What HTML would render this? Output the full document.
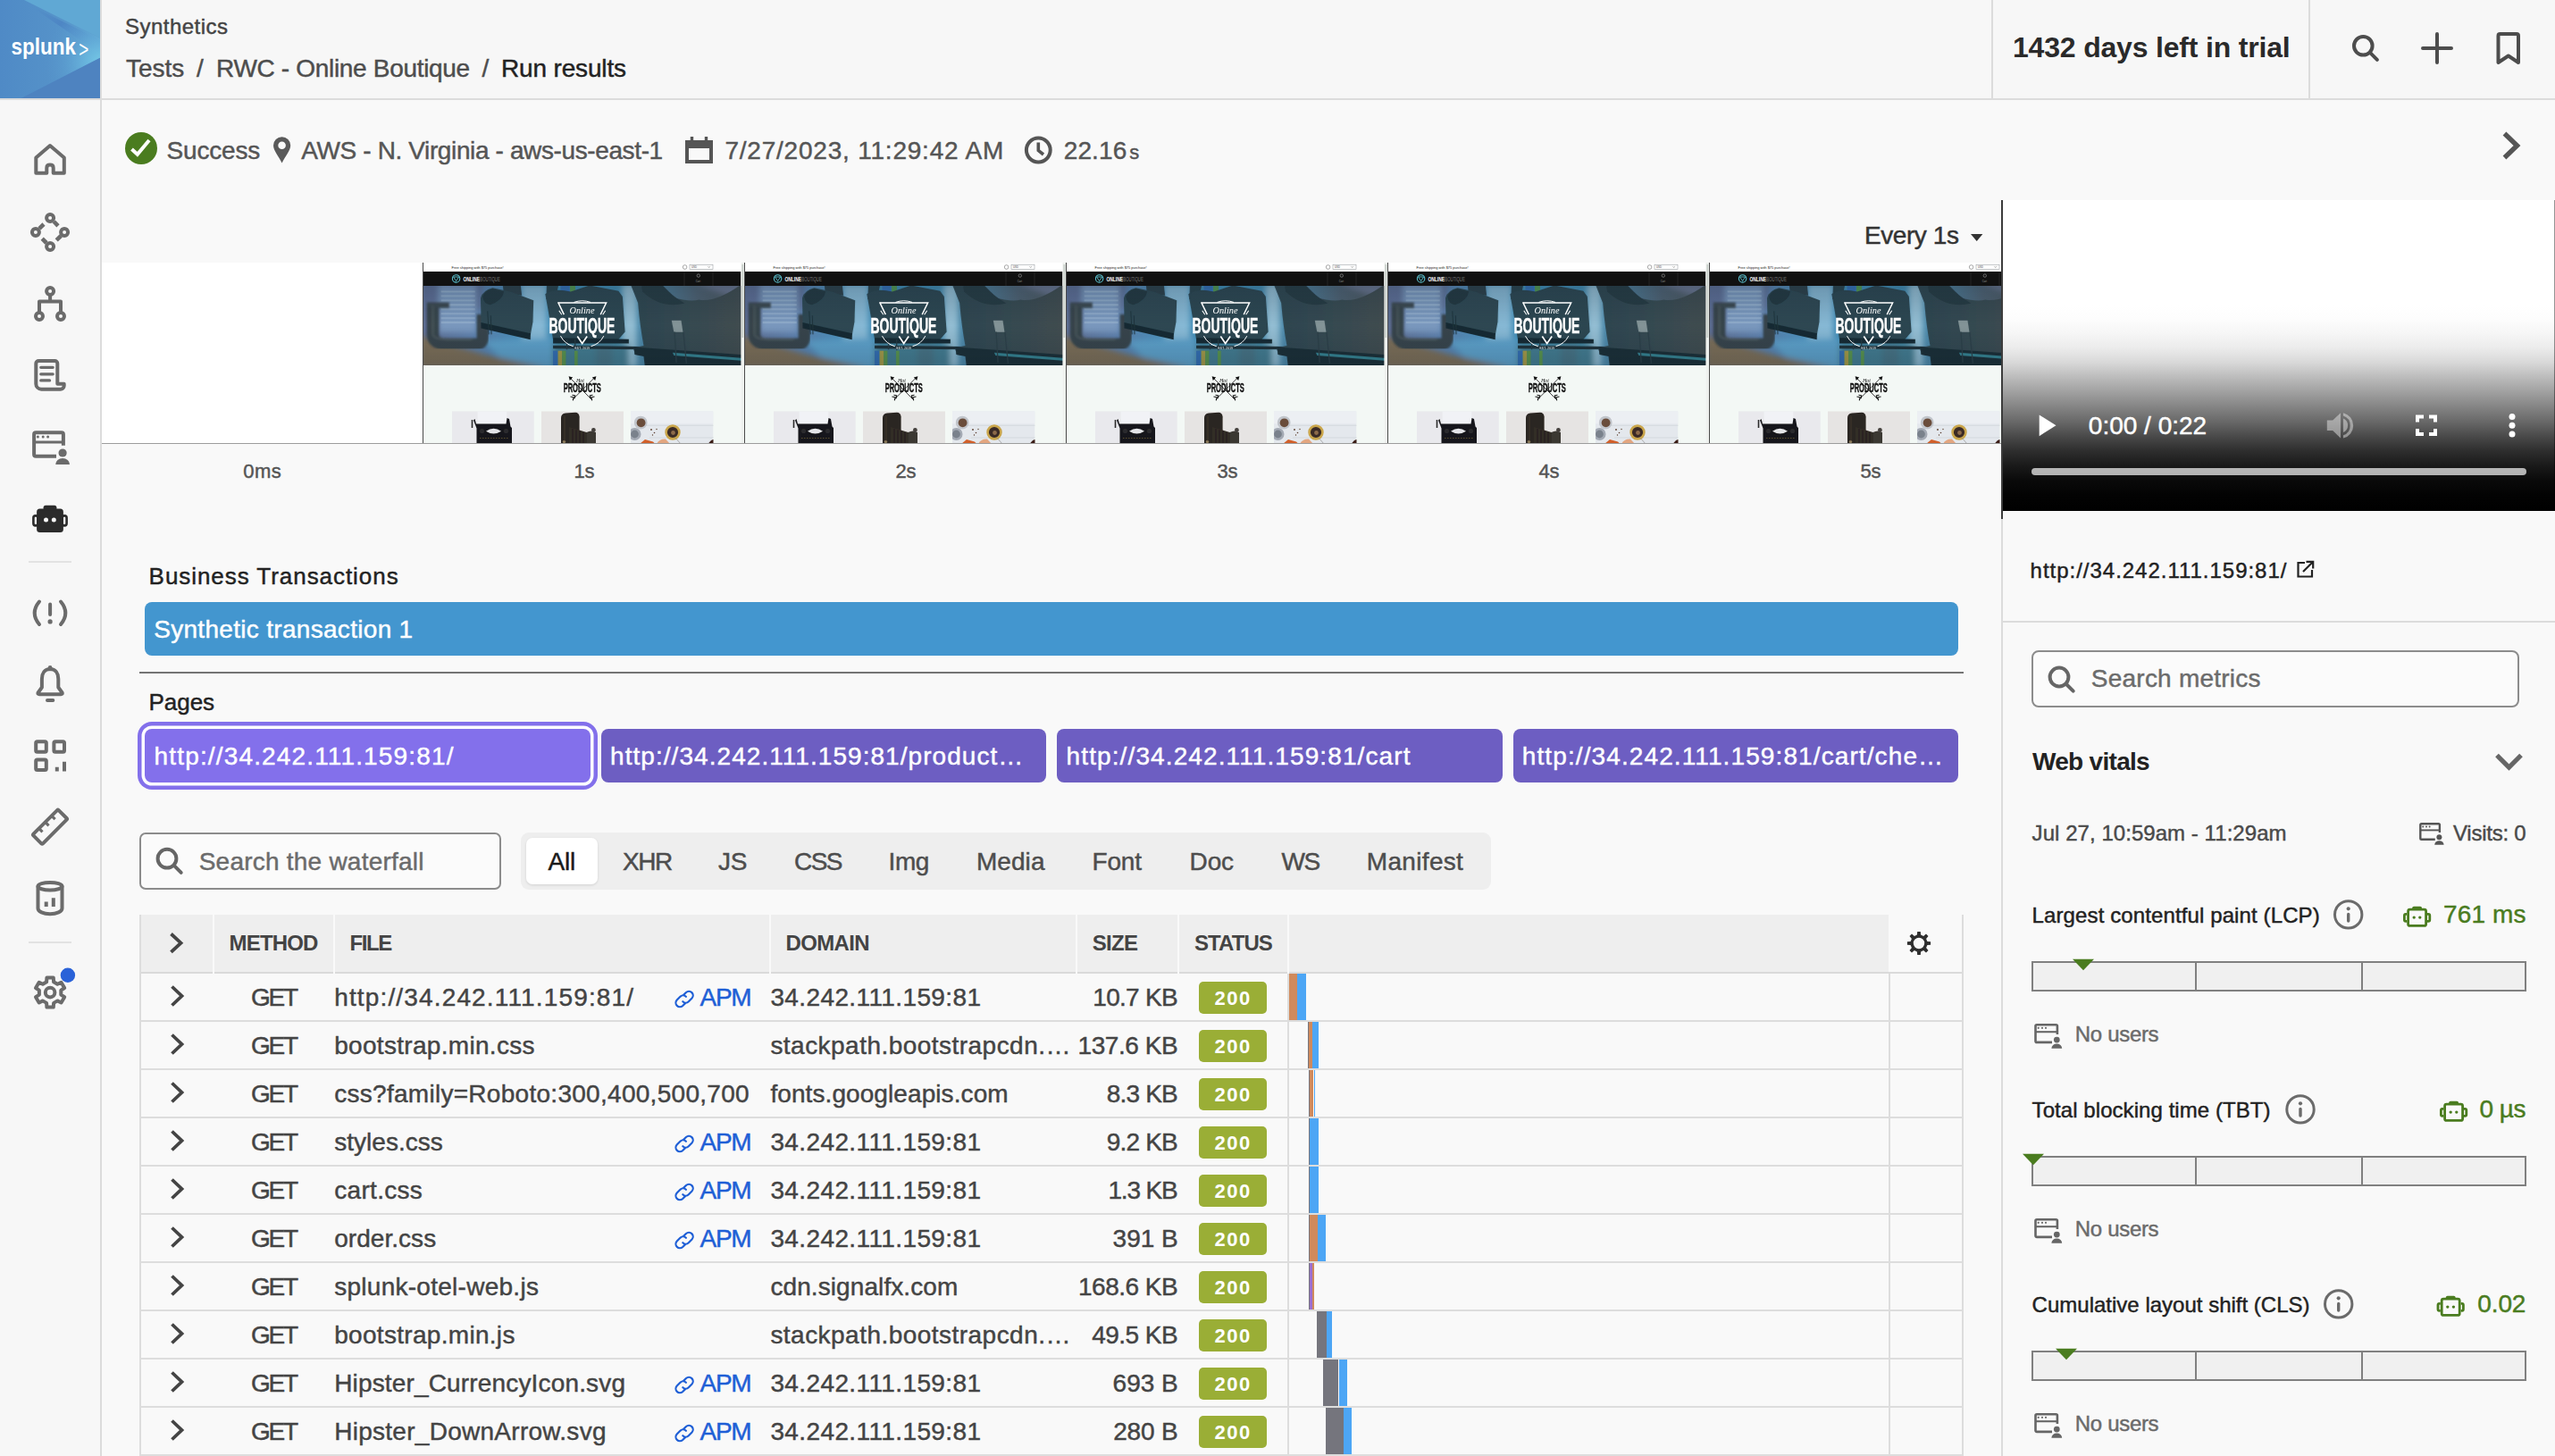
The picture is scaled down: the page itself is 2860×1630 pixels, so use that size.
<!DOCTYPE html>
<html lang="en"><head><meta charset="utf-8"><title>Run results - Synthetics</title>
<style>
*{box-sizing:border-box;margin:0;padding:0}
html,body{width:2860px;height:1630px;overflow:hidden;background:#f9f9f9}
body{position:relative;font-family:"Liberation Sans",sans-serif;}
.t{position:absolute;white-space:nowrap;line-height:1;-webkit-text-stroke:.45px}
.t.bd{-webkit-text-stroke:0}
.b{position:absolute;display:block}
svg.ov{position:absolute;left:0;top:0;pointer-events:none}
@media (max-width:2000px){body{zoom:.5}}
</style></head>
<body>
<svg width="0" height="0" style="position:absolute"><defs>
<linearGradient id="hg" x1="0" x2="1" y1="0" y2="0">
<stop offset="0" stop-color="#6f7096"/><stop offset=".15" stop-color="#6f86b8"/><stop offset=".3" stop-color="#5a9dcd"/>
<stop offset=".45" stop-color="#4a9ac6"/><stop offset=".6" stop-color="#4c96bf"/><stop offset=".7" stop-color="#5b8fb0"/>
<stop offset=".85" stop-color="#5d6270"/><stop offset="1" stop-color="#56504e"/>
</linearGradient>
<linearGradient id="hv" x1="0" x2="0" y1="0" y2="1">
<stop offset="0" stop-color="#1a2a3a" stop-opacity=".25"/><stop offset=".5" stop-color="#1a2a3a" stop-opacity="0"/><stop offset="1" stop-color="#10202c" stop-opacity=".2"/>
</linearGradient>
<linearGradient id="rs" x1="0" x2="1" y1="0" y2="0">
<stop offset="0" stop-color="#343f45"/><stop offset=".45" stop-color="#3d4447"/><stop offset="1" stop-color="#4e4745"/>
</linearGradient>
<filter id="b1" x="-10%" y="-10%" width="120%" height="120%"><feGaussianBlur stdDeviation="1.1"/></filter>
<filter id="b2" x="-10%" y="-10%" width="120%" height="120%"><feGaussianBlur stdDeviation="2.4"/></filter>
<filter id="b0" x="-10%" y="-10%" width="120%" height="120%"><feGaussianBlur stdDeviation=".5"/></filter>
<filter id="z1" x="-5%" y="-5%" width="110%" height="110%"><feGaussianBlur stdDeviation="5"/></filter>
<filter id="z15" x="-10%" y="-10%" width="120%" height="120%"><feGaussianBlur stdDeviation="9"/></filter>
<filter id="z2" x="-20%" y="-20%" width="140%" height="140%"><feGaussianBlur stdDeviation="22"/></filter>
<clipPath id="hc"><rect x="1" y="26" width="355.4" height="89"/></clipPath>
<clipPath id="p1"><rect x="33" y="166.300" width="91.700" height="36.700"/></clipPath>
<clipPath id="p2"><rect x="132.900" y="166.300" width="92.100" height="36.700"/></clipPath>
<clipPath id="p3"><rect x="233" y="166.3" width="92.5" height="36.7"/></clipPath>
</defs></svg>
<div class="b" style="left:0px;top:0px;width:2860px;height:110px;background:#f7f7f7;"></div><div class="b" style="left:0px;top:112px;width:112px;height:1518px;background:#f7f7f7;"></div><div class="b" style="left:0px;top:110px;width:2860px;height:2px;background:#dcdcdc;"></div><div class="b" style="left:112px;top:0px;width:2px;height:1630px;background:#dcdcdc;"></div><div class="b" style="left:32px;top:628px;width:48px;height:2px;background:#e2e2e2;"></div><div class="b" style="left:32px;top:1054px;width:48px;height:2px;background:#e2e2e2;"></div><svg class="b" style="left:0;top:0" width="112" height="110" viewBox="0 0 112 110"><defs><linearGradient id="lg1" x1="0" y1="0" x2="1" y2="0"><stop offset="0" stop-color="#4f8ac6"/><stop offset=".55" stop-color="#5592c9"/><stop offset="1" stop-color="#5c9fd0"/></linearGradient><radialGradient id="lg2" gradientUnits="userSpaceOnUse" cx="114" cy="70" r="64"><stop offset="0" stop-color="#76cae7"/><stop offset=".3" stop-color="#6cbbe0" stop-opacity=".75"/><stop offset=".65" stop-color="#62a9d6" stop-opacity=".3"/><stop offset="1" stop-color="#5a9acc" stop-opacity="0"/></radialGradient><linearGradient id="lg3" x1="0.2" y1="0" x2="0.9" y2="0.6"><stop offset="0" stop-color="#4a80c2" stop-opacity="0"/><stop offset=".5" stop-color="#4a80c2" stop-opacity=".7"/><stop offset="1" stop-color="#4f8ccb" stop-opacity=".2"/></linearGradient></defs><rect width="112" height="110" fill="url(#lg1)"/><path d="M30 4L112 45V60Z" fill="url(#lg3)"/><path d="M0 110H23.700L112 64.800V42.600L27 0H0Z" fill="url(#lg2)"/><path d="M27 0H112V42.600Z" fill="#60a8d4"/><path d="M23.700 110L112 64.800V110Z" fill="#4e83c0"/><text x="12.600" y="60.800" font-family='"Liberation Sans",sans-serif' font-weight="700" font-size="26.500" fill="#fff" textLength="72.400" lengthAdjust="spacingAndGlyphs">splunk</text><text x="88.300" y="63.600" font-family='"Liberation Sans",sans-serif' font-size="25" fill="#fff" textLength="11" lengthAdjust="spacingAndGlyphs">&gt;</text></svg><div class="t" style="left:140.0px;top:18.0px;font-size:24px;color:#444;letter-spacing:0.478px;">Synthetics</div><div class="t" style="left:141.0px;top:63.0px;font-size:28px;color:#4d4d4d;letter-spacing:-0.010px;">Tests</div><div class="t" style="left:220.0px;top:63.0px;font-size:28px;color:#4d4d4d;">/</div><div class="t" style="left:242.0px;top:63.0px;font-size:28px;color:#4d4d4d;letter-spacing:-0.319px;">RWC - Online Boutique</div><div class="t" style="left:539.5px;top:63.0px;font-size:28px;color:#4d4d4d;">/</div><div class="t" style="left:561.0px;top:63.0px;font-size:28px;color:#222;letter-spacing:-0.156px;">Run results</div><div class="b" style="left:2229px;top:0px;width:2px;height:110px;background:#dcdcdc;"></div><div class="b" style="left:2584px;top:0px;width:2px;height:110px;background:#dcdcdc;"></div><div class="t bd" style="left:2253.0px;top:37.0px;font-size:32px;color:#2a2a2a;font-weight:700;letter-spacing:-0.188px;">1432 days left in trial</div>
<div class="t" style="left:186.6px;top:155.0px;font-size:28px;color:#555;letter-spacing:-0.203px;">Success</div><div class="t" style="left:337.3px;top:155.0px;font-size:28px;color:#555;letter-spacing:-0.379px;">AWS - N. Virginia - aws-us-east-1</div><div class="t" style="left:811.4px;top:155.0px;font-size:28px;color:#555;letter-spacing:0.788px;">7/27/2023, 11:29:42 AM</div><div class="t" style="left:1190.7px;top:155.0px;font-size:28px;color:#555;letter-spacing:0.146px;">22.16</div><div class="t" style="left:1264.3px;top:160.0px;font-size:22px;color:#555;">s</div><div class="t" style="left:2086.9px;top:250.0px;font-size:28px;color:#333;letter-spacing:-0.403px;">Every 1s</div>
<div class="b" style="left:114px;top:294px;width:2126px;height:202px;background:#fff;"></div><svg class="b" style="left:473px;top:294px" width="360" height="203" viewBox="0 0 360 203"><rect x="0" y="0" width="360" height="203" fill="#fff"/><rect x="1" y="115" width="355.4" height="88" fill="#f3f8f5"/><text x="32.6" y="6.6" font-family='"Liberation Sans",sans-serif' font-size="3.9" fill="#222" textLength="58" lengthAdjust="spacingAndGlyphs">Free shipping with $75 purchase!</text><circle cx="293.6" cy="5" r="2.3" fill="none" stroke="#555" stroke-width=".5"/><rect x="299" y="2.3" width="26" height="5" fill="#fff" stroke="#8a8f94" stroke-width=".5"/><text x="301" y="6" font-family='"Liberation Sans",sans-serif' font-size="2.8" fill="#333">USD</text><path d="M319.5 4.2l1.2 1.3 1.2-1.3" fill="none" stroke="#444" stroke-width=".45"/><rect x="1" y="10" width="355.4" height="16" fill="#111"/><circle cx="37.6" cy="17.9" r="4.2" fill="none" stroke="#5cc2cf" stroke-width="1.1"/><path d="M34.6 16l6 0-3 4.6z" fill="none" stroke="#5cc2cf" stroke-width=".9"/><text x="45.4" y="21" font-family='"Liberation Sans",sans-serif' font-weight="700" font-size="6.6" fill="#fff" textLength="18.6" lengthAdjust="spacingAndGlyphs">ONLINE</text><text x="64.3" y="21" font-family='"Liberation Sans",sans-serif' font-size="6.6" fill="#777" textLength="22.5" lengthAdjust="spacingAndGlyphs">BOUTIQUE</text><path d="M293 10v16M325 10v16" stroke="#3a3a3a" stroke-width=".5"/><circle cx="308.8" cy="14.6" r="1.7" fill="none" stroke="#bbb" stroke-width=".5"/><text x="305.8" y="21.5" font-family='"Liberation Sans",sans-serif' font-size="2.8" fill="#999">Cart</text><g clip-path="url(#hc)"><g transform="translate(-.5 24) scale(.14091)"><rect x="0" y="0" width="2570" height="660" fill="url(#hg)"/><g filter="url(#z2)"><rect x="-20" y="-20" width="500" height="230" fill="#70729d"/><rect x="130" y="0" width="300" height="385" fill="#93a6cf"/><rect x="790" y="0" width="200" height="540" fill="#a3cfec"/><rect x="1590" y="0" width="115" height="660" fill="#b3d6ea"/><path d="M480 450L1040 430V660H700Z" fill="#6fb2e0"/><path d="M-20 410L500 560 1010 670H-20Z" fill="#97724f"/><path d="M2150 -10H2580V150Z" fill="#7f7a95"/><rect x="1040" y="470" width="600" height="200" fill="#4f8498"/><rect x="1380" y="470" width="130" height="200" fill="#527888"/></g><g filter="url(#z1)"><path d="M1040 530h36v130h-36z" fill="#3b72c2"/><path d="M1080 530h32v130h-32z" fill="#c9a93a"/><path d="M1112 530h30v130h-30z" fill="#6ba242"/><path d="M1210 530h26v130h-26z" fill="#6ba242"/><path d="M1100 0h72v90h-72z" fill="#3d74c6"/><path d="M1175 0h42v80h-42z" fill="#62a546"/><path d="M150 60H420M150 95H420M150 130H420M150 165H420M150 200H420M150 235H420M150 270H420M150 305H420" stroke="#cfdbf0" stroke-width="11" opacity=".6"/><g filter="url(#z15)"><path d="M85 150V400Q85 478 200 478H420Q482 478 482 420V240" fill="none" stroke="#403d3f" stroke-width="96"/><path d="M40 168H215" stroke="#454244" stroke-width="44"/><path d="M85 170V395Q85 440 200 440H400" fill="none" stroke="#5a5657" stroke-width="14"/></g><path d="M640 0H782L792 90H650Z" fill="#30383d"/><path d="M465 110Q480 50 560 30L700 60 885 130 880 300 862 400 470 330Z" fill="#34434a"/><path d="M480 100Q500 50 560 38L650 60Q640 130 540 165Q490 160 480 100Z" fill="#272d31"/><path d="M468 305L862 392 860 442 468 352Z" fill="#191f23"/><path d="M520 215L530 400M545 250L550 400" stroke="#22282c" stroke-width="7"/><path d="M990 0H1085L1060 120H985Z" fill="#2f3b41"/><path d="M978 80Q1040 30 1180 60L1330 10 1560 55 1592 100 1612 380 1560 440H1040L1000 200Z" fill="#303f46"/><path d="M1040 428L1642 438V472H1040Z" fill="#181e22"/><path d="M1040 488L1905 498V522L1040 512Z" fill="#20272b"/><path d="M1150 440V520M1215 440V525" stroke="#2a3136" stroke-width="9"/><path d="M1655 0L1715 150Q1730 330 1760 490L1680 505 1690 560 2580 650V0H2540Q2330 150 2200 125Q2080 160 1745 20L1740 0Z" fill="url(#rs)"/><path d="M1740 0L1750 60Q1900 200 2085 152Q2010 110 1960 60L1900 0Z" fill="#2b3135"/><path d="M1680 500L2580 565V660H1770L1760 575 1690 560Z" fill="#1e2428"/><path d="M1990 545L2580 590V612L2000 568Z" fill="#3e8c98"/><path d="M1982 290H2058L2072 382H2000Z" fill="#9fa19f"/><path d="M2005 380L2020 625M2075 382L2100 630" stroke="#33383c" stroke-width="9"/></g><rect x="0" y="0" width="2570" height="660" fill="#12607a" opacity=".2"/><rect x="0" y="0" width="2570" height="660" fill="url(#hv)"/></g></g><g fill="none" stroke="#fff" stroke-width="1.5" stroke-linecap="square"><path d="M152 45H205.600L199.500 57.500M152 45L158 57.500"/><path d="M155.500 57.800l-2.400 -3.600M202 57.800l2.400 -3.600" stroke-width="1.100"/><path d="M170 44.200Q178.700 41.200 187.500 44.200" stroke-width="1"/><path d="M154.700 82.600Q159 91 168.300 93.600M202.600 82.600Q198.300 91 189 93.600" stroke-width="1"/><path d="M173.800 83.300L178.700 90.400 183.700 83.300" stroke-width="1.700"/></g><text x="164.500" y="56.600" font-family='"Liberation Serif",serif' font-style="italic" font-size="10" fill="#fff" textLength="28" lengthAdjust="spacingAndGlyphs">Online</text><text x="141.400" y="78.600" font-family='"Liberation Sans",sans-serif' font-weight="700" font-size="24.200" fill="#fff" stroke="#fff" stroke-width=".5" textLength="74" lengthAdjust="spacingAndGlyphs">BOUTIQUE</text><text x="170.500" y="97.300" font-family='"Liberation Sans",sans-serif' font-size="3" fill="#fff" textLength="16.500" lengthAdjust="spacing">EST. 2019</text><path d="M164.500 128.500L189 153M192.800 128.500L168.300 153" stroke="#111" stroke-width=".8"/><path d="M163.600 127.300l4.600 1.200-3.400 3.400zM194.400 127.300l-4.600 1.200 3.400 3.400z" fill="#111"/><path d="M165.500 150l3.600 .8-.8 3.600M192.500 150l-3.600 .8 .8 3.600M167.500 148.300l3.200 .7-.7 3.200M190.500 148.300l-3.200 .7 .7 3.200" fill="none" stroke="#111" stroke-width="1.100"/><text x="172" y="133.600" font-family='"Liberation Serif",serif' font-style="italic" font-size="6" fill="#222" textLength="9" lengthAdjust="spacingAndGlyphs">Hot</text><text x="157.700" y="145.200" font-family='"Liberation Sans",sans-serif' font-weight="700" font-size="14.300" fill="#111" stroke="#111" stroke-width=".45" textLength="42" lengthAdjust="spacingAndGlyphs">PRODUCTS</text><g clip-path="url(#p1)"><rect x="32.600" y="166.300" width="92.400" height="37" fill="#e9e9ed"/><rect x="61.600" y="166.300" width="32.700" height="16" fill="#f1f2f6"/><g filter="url(#b0)"><path d="M57 176.500l1.500-1.500 1.500 5.500h33.500l1-6.500 2.500 1 1.500 8.500 1.500 1.500v18H60.500v-17.500z" fill="#19191b"/><path d="M55.500 176v9" stroke="#2a2a2c" stroke-width="1.600"/><circle cx="66.500" cy="188.500" r="2.600" fill="#2b2b2e"/><circle cx="93.500" cy="188.500" r="2.600" fill="#2b2b2e"/><path d="M71 188.800q8.500-6 17 0q-8.500 5.500-17 0z" fill="#e4e5e9"/><path d="M64 196.500h32" stroke="#6a5a34" stroke-width=".8" stroke-dasharray="1.500 1.500"/></g></g><g clip-path="url(#p2)"><rect x="132.900" y="166.300" width="92.200" height="37" fill="#e6e4e3"/><g filter="url(#b0)"><path d="M155 174q0-5 5-5.500l11-.8q4 0 4.600 4.500v31H155z" fill="#2b2521"/><path d="M164 184l24.500 7.500v13H164z" fill="#332d28"/><path d="M168 186v18M172 187.500v17M176 188.500v16M180 190v14M184 191v13" stroke="#1f1b18" stroke-width=".9"/><path d="M183.500 190q5.500-3 10.500 0v14h-10.500z" fill="#3b3733"/><circle cx="191.400" cy="187.400" r="2.400" fill="#45413e"/><circle cx="158.500" cy="200.500" r="1.700" fill="#8a7a5a"/><path d="M159 172v28" stroke="#4a3d33" stroke-width=".7"/></g></g><g clip-path="url(#p3)"><rect x="233" y="166.300" width="92.500" height="37" fill="#e4e8ed"/><rect x="233" y="166.300" width="92.500" height="14" fill="#eceff3"/><path d="M250 182.300h76M254 196h72" stroke="#cdd2d9" stroke-width=".7"/><g filter="url(#b0)"><circle cx="244.200" cy="179.100" r="7.400" fill="#c1c5cb"/><circle cx="244.600" cy="179.300" r="4.900" fill="#6b4d3b"/><circle cx="237.500" cy="192" r="7" fill="#a4aab4"/><circle cx="237.500" cy="192" r="4.400" fill="#7a828c"/><circle cx="280" cy="190" r="7.400" fill="#3a2c25" stroke="#c9a54b" stroke-width="2.600"/><circle cx="280.500" cy="190.500" r="2.400" fill="#8d6a4a"/><path d="M243 203l6-5 9 2.500 3 3z" fill="#d2602a"/><path d="M262 203q3-6 10-5.500l5 5.500z" fill="#e3a680"/><path d="M283 196l6 7" stroke="#9a9a9a" stroke-width=".8"/><path d="M320 203.500q1.500-5 6-5.500v6z" fill="#3a1f18"/><circle cx="256" cy="187" r=".9" fill="#5a3d2e"/><circle cx="259.500" cy="190.500" r=".8" fill="#5a3d2e"/><circle cx="262" cy="186.500" r=".7" fill="#5a3d2e"/><circle cx="257.500" cy="193" r=".7" fill="#5a3d2e"/></g></g><rect x="0" y="0" width="1" height="203" fill="#4a4a4a"/><rect x="356.400" y="0" width="3.600" height="203" fill="#eef1ee"/><rect x="357.400" y="2" width="1.800" height="82" fill="#c9cfca"/></svg><svg class="b" style="left:833px;top:294px" width="360" height="203" viewBox="0 0 360 203"><rect x="0" y="0" width="360" height="203" fill="#fff"/><rect x="1" y="115" width="355.4" height="88" fill="#f3f8f5"/><text x="32.6" y="6.6" font-family='"Liberation Sans",sans-serif' font-size="3.9" fill="#222" textLength="58" lengthAdjust="spacingAndGlyphs">Free shipping with $75 purchase!</text><circle cx="293.6" cy="5" r="2.3" fill="none" stroke="#555" stroke-width=".5"/><rect x="299" y="2.3" width="26" height="5" fill="#fff" stroke="#8a8f94" stroke-width=".5"/><text x="301" y="6" font-family='"Liberation Sans",sans-serif' font-size="2.8" fill="#333">USD</text><path d="M319.5 4.2l1.2 1.3 1.2-1.3" fill="none" stroke="#444" stroke-width=".45"/><rect x="1" y="10" width="355.4" height="16" fill="#111"/><circle cx="37.6" cy="17.9" r="4.2" fill="none" stroke="#5cc2cf" stroke-width="1.1"/><path d="M34.6 16l6 0-3 4.6z" fill="none" stroke="#5cc2cf" stroke-width=".9"/><text x="45.4" y="21" font-family='"Liberation Sans",sans-serif' font-weight="700" font-size="6.6" fill="#fff" textLength="18.6" lengthAdjust="spacingAndGlyphs">ONLINE</text><text x="64.3" y="21" font-family='"Liberation Sans",sans-serif' font-size="6.6" fill="#777" textLength="22.5" lengthAdjust="spacingAndGlyphs">BOUTIQUE</text><path d="M293 10v16M325 10v16" stroke="#3a3a3a" stroke-width=".5"/><circle cx="308.8" cy="14.6" r="1.7" fill="none" stroke="#bbb" stroke-width=".5"/><text x="305.8" y="21.5" font-family='"Liberation Sans",sans-serif' font-size="2.8" fill="#999">Cart</text><g clip-path="url(#hc)"><g transform="translate(-.5 24) scale(.14091)"><rect x="0" y="0" width="2570" height="660" fill="url(#hg)"/><g filter="url(#z2)"><rect x="-20" y="-20" width="500" height="230" fill="#70729d"/><rect x="130" y="0" width="300" height="385" fill="#93a6cf"/><rect x="790" y="0" width="200" height="540" fill="#a3cfec"/><rect x="1590" y="0" width="115" height="660" fill="#b3d6ea"/><path d="M480 450L1040 430V660H700Z" fill="#6fb2e0"/><path d="M-20 410L500 560 1010 670H-20Z" fill="#97724f"/><path d="M2150 -10H2580V150Z" fill="#7f7a95"/><rect x="1040" y="470" width="600" height="200" fill="#4f8498"/><rect x="1380" y="470" width="130" height="200" fill="#527888"/></g><g filter="url(#z1)"><path d="M1040 530h36v130h-36z" fill="#3b72c2"/><path d="M1080 530h32v130h-32z" fill="#c9a93a"/><path d="M1112 530h30v130h-30z" fill="#6ba242"/><path d="M1210 530h26v130h-26z" fill="#6ba242"/><path d="M1100 0h72v90h-72z" fill="#3d74c6"/><path d="M1175 0h42v80h-42z" fill="#62a546"/><path d="M150 60H420M150 95H420M150 130H420M150 165H420M150 200H420M150 235H420M150 270H420M150 305H420" stroke="#cfdbf0" stroke-width="11" opacity=".6"/><g filter="url(#z15)"><path d="M85 150V400Q85 478 200 478H420Q482 478 482 420V240" fill="none" stroke="#403d3f" stroke-width="96"/><path d="M40 168H215" stroke="#454244" stroke-width="44"/><path d="M85 170V395Q85 440 200 440H400" fill="none" stroke="#5a5657" stroke-width="14"/></g><path d="M640 0H782L792 90H650Z" fill="#30383d"/><path d="M465 110Q480 50 560 30L700 60 885 130 880 300 862 400 470 330Z" fill="#34434a"/><path d="M480 100Q500 50 560 38L650 60Q640 130 540 165Q490 160 480 100Z" fill="#272d31"/><path d="M468 305L862 392 860 442 468 352Z" fill="#191f23"/><path d="M520 215L530 400M545 250L550 400" stroke="#22282c" stroke-width="7"/><path d="M990 0H1085L1060 120H985Z" fill="#2f3b41"/><path d="M978 80Q1040 30 1180 60L1330 10 1560 55 1592 100 1612 380 1560 440H1040L1000 200Z" fill="#303f46"/><path d="M1040 428L1642 438V472H1040Z" fill="#181e22"/><path d="M1040 488L1905 498V522L1040 512Z" fill="#20272b"/><path d="M1150 440V520M1215 440V525" stroke="#2a3136" stroke-width="9"/><path d="M1655 0L1715 150Q1730 330 1760 490L1680 505 1690 560 2580 650V0H2540Q2330 150 2200 125Q2080 160 1745 20L1740 0Z" fill="url(#rs)"/><path d="M1740 0L1750 60Q1900 200 2085 152Q2010 110 1960 60L1900 0Z" fill="#2b3135"/><path d="M1680 500L2580 565V660H1770L1760 575 1690 560Z" fill="#1e2428"/><path d="M1990 545L2580 590V612L2000 568Z" fill="#3e8c98"/><path d="M1982 290H2058L2072 382H2000Z" fill="#9fa19f"/><path d="M2005 380L2020 625M2075 382L2100 630" stroke="#33383c" stroke-width="9"/></g><rect x="0" y="0" width="2570" height="660" fill="#12607a" opacity=".2"/><rect x="0" y="0" width="2570" height="660" fill="url(#hv)"/></g></g><g fill="none" stroke="#fff" stroke-width="1.5" stroke-linecap="square"><path d="M152 45H205.600L199.500 57.500M152 45L158 57.500"/><path d="M155.500 57.800l-2.400 -3.600M202 57.800l2.400 -3.600" stroke-width="1.100"/><path d="M170 44.200Q178.700 41.200 187.500 44.200" stroke-width="1"/><path d="M154.700 82.600Q159 91 168.300 93.600M202.600 82.600Q198.300 91 189 93.600" stroke-width="1"/><path d="M173.800 83.300L178.700 90.400 183.700 83.300" stroke-width="1.700"/></g><text x="164.500" y="56.600" font-family='"Liberation Serif",serif' font-style="italic" font-size="10" fill="#fff" textLength="28" lengthAdjust="spacingAndGlyphs">Online</text><text x="141.400" y="78.600" font-family='"Liberation Sans",sans-serif' font-weight="700" font-size="24.200" fill="#fff" stroke="#fff" stroke-width=".5" textLength="74" lengthAdjust="spacingAndGlyphs">BOUTIQUE</text><text x="170.500" y="97.300" font-family='"Liberation Sans",sans-serif' font-size="3" fill="#fff" textLength="16.500" lengthAdjust="spacing">EST. 2019</text><path d="M164.500 128.500L189 153M192.800 128.500L168.300 153" stroke="#111" stroke-width=".8"/><path d="M163.600 127.300l4.600 1.200-3.400 3.400zM194.400 127.300l-4.600 1.200 3.400 3.400z" fill="#111"/><path d="M165.500 150l3.600 .8-.8 3.600M192.500 150l-3.600 .8 .8 3.600M167.500 148.300l3.200 .7-.7 3.200M190.500 148.300l-3.200 .7 .7 3.200" fill="none" stroke="#111" stroke-width="1.100"/><text x="172" y="133.600" font-family='"Liberation Serif",serif' font-style="italic" font-size="6" fill="#222" textLength="9" lengthAdjust="spacingAndGlyphs">Hot</text><text x="157.700" y="145.200" font-family='"Liberation Sans",sans-serif' font-weight="700" font-size="14.300" fill="#111" stroke="#111" stroke-width=".45" textLength="42" lengthAdjust="spacingAndGlyphs">PRODUCTS</text><g clip-path="url(#p1)"><rect x="32.600" y="166.300" width="92.400" height="37" fill="#e9e9ed"/><rect x="61.600" y="166.300" width="32.700" height="16" fill="#f1f2f6"/><g filter="url(#b0)"><path d="M57 176.500l1.500-1.500 1.500 5.500h33.500l1-6.500 2.500 1 1.500 8.500 1.500 1.500v18H60.500v-17.500z" fill="#19191b"/><path d="M55.500 176v9" stroke="#2a2a2c" stroke-width="1.600"/><circle cx="66.500" cy="188.500" r="2.600" fill="#2b2b2e"/><circle cx="93.500" cy="188.500" r="2.600" fill="#2b2b2e"/><path d="M71 188.800q8.500-6 17 0q-8.500 5.500-17 0z" fill="#e4e5e9"/><path d="M64 196.500h32" stroke="#6a5a34" stroke-width=".8" stroke-dasharray="1.500 1.500"/></g></g><g clip-path="url(#p2)"><rect x="132.900" y="166.300" width="92.200" height="37" fill="#e6e4e3"/><g filter="url(#b0)"><path d="M155 174q0-5 5-5.500l11-.8q4 0 4.600 4.500v31H155z" fill="#2b2521"/><path d="M164 184l24.500 7.500v13H164z" fill="#332d28"/><path d="M168 186v18M172 187.500v17M176 188.500v16M180 190v14M184 191v13" stroke="#1f1b18" stroke-width=".9"/><path d="M183.500 190q5.500-3 10.500 0v14h-10.500z" fill="#3b3733"/><circle cx="191.400" cy="187.400" r="2.400" fill="#45413e"/><circle cx="158.500" cy="200.500" r="1.700" fill="#8a7a5a"/><path d="M159 172v28" stroke="#4a3d33" stroke-width=".7"/></g></g><g clip-path="url(#p3)"><rect x="233" y="166.300" width="92.500" height="37" fill="#e4e8ed"/><rect x="233" y="166.300" width="92.500" height="14" fill="#eceff3"/><path d="M250 182.300h76M254 196h72" stroke="#cdd2d9" stroke-width=".7"/><g filter="url(#b0)"><circle cx="244.200" cy="179.100" r="7.400" fill="#c1c5cb"/><circle cx="244.600" cy="179.300" r="4.900" fill="#6b4d3b"/><circle cx="237.500" cy="192" r="7" fill="#a4aab4"/><circle cx="237.500" cy="192" r="4.400" fill="#7a828c"/><circle cx="280" cy="190" r="7.400" fill="#3a2c25" stroke="#c9a54b" stroke-width="2.600"/><circle cx="280.500" cy="190.500" r="2.400" fill="#8d6a4a"/><path d="M243 203l6-5 9 2.500 3 3z" fill="#d2602a"/><path d="M262 203q3-6 10-5.500l5 5.500z" fill="#e3a680"/><path d="M283 196l6 7" stroke="#9a9a9a" stroke-width=".8"/><path d="M320 203.500q1.500-5 6-5.500v6z" fill="#3a1f18"/><circle cx="256" cy="187" r=".9" fill="#5a3d2e"/><circle cx="259.500" cy="190.500" r=".8" fill="#5a3d2e"/><circle cx="262" cy="186.500" r=".7" fill="#5a3d2e"/><circle cx="257.500" cy="193" r=".7" fill="#5a3d2e"/></g></g><rect x="0" y="0" width="1" height="203" fill="#4a4a4a"/><rect x="356.400" y="0" width="3.600" height="203" fill="#eef1ee"/><rect x="357.400" y="2" width="1.800" height="82" fill="#c9cfca"/></svg><svg class="b" style="left:1193px;top:294px" width="360" height="203" viewBox="0 0 360 203"><rect x="0" y="0" width="360" height="203" fill="#fff"/><rect x="1" y="115" width="355.4" height="88" fill="#f3f8f5"/><text x="32.6" y="6.6" font-family='"Liberation Sans",sans-serif' font-size="3.9" fill="#222" textLength="58" lengthAdjust="spacingAndGlyphs">Free shipping with $75 purchase!</text><circle cx="293.6" cy="5" r="2.3" fill="none" stroke="#555" stroke-width=".5"/><rect x="299" y="2.3" width="26" height="5" fill="#fff" stroke="#8a8f94" stroke-width=".5"/><text x="301" y="6" font-family='"Liberation Sans",sans-serif' font-size="2.8" fill="#333">USD</text><path d="M319.5 4.2l1.2 1.3 1.2-1.3" fill="none" stroke="#444" stroke-width=".45"/><rect x="1" y="10" width="355.4" height="16" fill="#111"/><circle cx="37.6" cy="17.9" r="4.2" fill="none" stroke="#5cc2cf" stroke-width="1.1"/><path d="M34.6 16l6 0-3 4.6z" fill="none" stroke="#5cc2cf" stroke-width=".9"/><text x="45.4" y="21" font-family='"Liberation Sans",sans-serif' font-weight="700" font-size="6.6" fill="#fff" textLength="18.6" lengthAdjust="spacingAndGlyphs">ONLINE</text><text x="64.3" y="21" font-family='"Liberation Sans",sans-serif' font-size="6.6" fill="#777" textLength="22.5" lengthAdjust="spacingAndGlyphs">BOUTIQUE</text><path d="M293 10v16M325 10v16" stroke="#3a3a3a" stroke-width=".5"/><circle cx="308.8" cy="14.6" r="1.7" fill="none" stroke="#bbb" stroke-width=".5"/><text x="305.8" y="21.5" font-family='"Liberation Sans",sans-serif' font-size="2.8" fill="#999">Cart</text><g clip-path="url(#hc)"><g transform="translate(-.5 24) scale(.14091)"><rect x="0" y="0" width="2570" height="660" fill="url(#hg)"/><g filter="url(#z2)"><rect x="-20" y="-20" width="500" height="230" fill="#70729d"/><rect x="130" y="0" width="300" height="385" fill="#93a6cf"/><rect x="790" y="0" width="200" height="540" fill="#a3cfec"/><rect x="1590" y="0" width="115" height="660" fill="#b3d6ea"/><path d="M480 450L1040 430V660H700Z" fill="#6fb2e0"/><path d="M-20 410L500 560 1010 670H-20Z" fill="#97724f"/><path d="M2150 -10H2580V150Z" fill="#7f7a95"/><rect x="1040" y="470" width="600" height="200" fill="#4f8498"/><rect x="1380" y="470" width="130" height="200" fill="#527888"/></g><g filter="url(#z1)"><path d="M1040 530h36v130h-36z" fill="#3b72c2"/><path d="M1080 530h32v130h-32z" fill="#c9a93a"/><path d="M1112 530h30v130h-30z" fill="#6ba242"/><path d="M1210 530h26v130h-26z" fill="#6ba242"/><path d="M1100 0h72v90h-72z" fill="#3d74c6"/><path d="M1175 0h42v80h-42z" fill="#62a546"/><path d="M150 60H420M150 95H420M150 130H420M150 165H420M150 200H420M150 235H420M150 270H420M150 305H420" stroke="#cfdbf0" stroke-width="11" opacity=".6"/><g filter="url(#z15)"><path d="M85 150V400Q85 478 200 478H420Q482 478 482 420V240" fill="none" stroke="#403d3f" stroke-width="96"/><path d="M40 168H215" stroke="#454244" stroke-width="44"/><path d="M85 170V395Q85 440 200 440H400" fill="none" stroke="#5a5657" stroke-width="14"/></g><path d="M640 0H782L792 90H650Z" fill="#30383d"/><path d="M465 110Q480 50 560 30L700 60 885 130 880 300 862 400 470 330Z" fill="#34434a"/><path d="M480 100Q500 50 560 38L650 60Q640 130 540 165Q490 160 480 100Z" fill="#272d31"/><path d="M468 305L862 392 860 442 468 352Z" fill="#191f23"/><path d="M520 215L530 400M545 250L550 400" stroke="#22282c" stroke-width="7"/><path d="M990 0H1085L1060 120H985Z" fill="#2f3b41"/><path d="M978 80Q1040 30 1180 60L1330 10 1560 55 1592 100 1612 380 1560 440H1040L1000 200Z" fill="#303f46"/><path d="M1040 428L1642 438V472H1040Z" fill="#181e22"/><path d="M1040 488L1905 498V522L1040 512Z" fill="#20272b"/><path d="M1150 440V520M1215 440V525" stroke="#2a3136" stroke-width="9"/><path d="M1655 0L1715 150Q1730 330 1760 490L1680 505 1690 560 2580 650V0H2540Q2330 150 2200 125Q2080 160 1745 20L1740 0Z" fill="url(#rs)"/><path d="M1740 0L1750 60Q1900 200 2085 152Q2010 110 1960 60L1900 0Z" fill="#2b3135"/><path d="M1680 500L2580 565V660H1770L1760 575 1690 560Z" fill="#1e2428"/><path d="M1990 545L2580 590V612L2000 568Z" fill="#3e8c98"/><path d="M1982 290H2058L2072 382H2000Z" fill="#9fa19f"/><path d="M2005 380L2020 625M2075 382L2100 630" stroke="#33383c" stroke-width="9"/></g><rect x="0" y="0" width="2570" height="660" fill="#12607a" opacity=".2"/><rect x="0" y="0" width="2570" height="660" fill="url(#hv)"/></g></g><g fill="none" stroke="#fff" stroke-width="1.5" stroke-linecap="square"><path d="M152 45H205.600L199.500 57.500M152 45L158 57.500"/><path d="M155.500 57.800l-2.400 -3.600M202 57.800l2.400 -3.600" stroke-width="1.100"/><path d="M170 44.200Q178.700 41.200 187.500 44.200" stroke-width="1"/><path d="M154.700 82.600Q159 91 168.300 93.600M202.600 82.600Q198.300 91 189 93.600" stroke-width="1"/><path d="M173.800 83.300L178.700 90.400 183.700 83.300" stroke-width="1.700"/></g><text x="164.500" y="56.600" font-family='"Liberation Serif",serif' font-style="italic" font-size="10" fill="#fff" textLength="28" lengthAdjust="spacingAndGlyphs">Online</text><text x="141.400" y="78.600" font-family='"Liberation Sans",sans-serif' font-weight="700" font-size="24.200" fill="#fff" stroke="#fff" stroke-width=".5" textLength="74" lengthAdjust="spacingAndGlyphs">BOUTIQUE</text><text x="170.500" y="97.300" font-family='"Liberation Sans",sans-serif' font-size="3" fill="#fff" textLength="16.500" lengthAdjust="spacing">EST. 2019</text><path d="M164.500 128.500L189 153M192.800 128.500L168.300 153" stroke="#111" stroke-width=".8"/><path d="M163.600 127.300l4.600 1.200-3.400 3.400zM194.400 127.300l-4.600 1.200 3.400 3.400z" fill="#111"/><path d="M165.500 150l3.600 .8-.8 3.600M192.500 150l-3.600 .8 .8 3.600M167.500 148.300l3.200 .7-.7 3.200M190.500 148.300l-3.200 .7 .7 3.200" fill="none" stroke="#111" stroke-width="1.100"/><text x="172" y="133.600" font-family='"Liberation Serif",serif' font-style="italic" font-size="6" fill="#222" textLength="9" lengthAdjust="spacingAndGlyphs">Hot</text><text x="157.700" y="145.200" font-family='"Liberation Sans",sans-serif' font-weight="700" font-size="14.300" fill="#111" stroke="#111" stroke-width=".45" textLength="42" lengthAdjust="spacingAndGlyphs">PRODUCTS</text><g clip-path="url(#p1)"><rect x="32.600" y="166.300" width="92.400" height="37" fill="#e9e9ed"/><rect x="61.600" y="166.300" width="32.700" height="16" fill="#f1f2f6"/><g filter="url(#b0)"><path d="M57 176.500l1.500-1.500 1.500 5.500h33.500l1-6.500 2.500 1 1.500 8.500 1.500 1.500v18H60.500v-17.500z" fill="#19191b"/><path d="M55.500 176v9" stroke="#2a2a2c" stroke-width="1.600"/><circle cx="66.500" cy="188.500" r="2.600" fill="#2b2b2e"/><circle cx="93.500" cy="188.500" r="2.600" fill="#2b2b2e"/><path d="M71 188.800q8.500-6 17 0q-8.500 5.500-17 0z" fill="#e4e5e9"/><path d="M64 196.500h32" stroke="#6a5a34" stroke-width=".8" stroke-dasharray="1.500 1.500"/></g></g><g clip-path="url(#p2)"><rect x="132.900" y="166.300" width="92.200" height="37" fill="#e6e4e3"/><g filter="url(#b0)"><path d="M155 174q0-5 5-5.500l11-.8q4 0 4.600 4.500v31H155z" fill="#2b2521"/><path d="M164 184l24.500 7.500v13H164z" fill="#332d28"/><path d="M168 186v18M172 187.500v17M176 188.500v16M180 190v14M184 191v13" stroke="#1f1b18" stroke-width=".9"/><path d="M183.500 190q5.500-3 10.500 0v14h-10.500z" fill="#3b3733"/><circle cx="191.400" cy="187.400" r="2.400" fill="#45413e"/><circle cx="158.500" cy="200.500" r="1.700" fill="#8a7a5a"/><path d="M159 172v28" stroke="#4a3d33" stroke-width=".7"/></g></g><g clip-path="url(#p3)"><rect x="233" y="166.300" width="92.500" height="37" fill="#e4e8ed"/><rect x="233" y="166.300" width="92.500" height="14" fill="#eceff3"/><path d="M250 182.300h76M254 196h72" stroke="#cdd2d9" stroke-width=".7"/><g filter="url(#b0)"><circle cx="244.200" cy="179.100" r="7.400" fill="#c1c5cb"/><circle cx="244.600" cy="179.300" r="4.900" fill="#6b4d3b"/><circle cx="237.500" cy="192" r="7" fill="#a4aab4"/><circle cx="237.500" cy="192" r="4.400" fill="#7a828c"/><circle cx="280" cy="190" r="7.400" fill="#3a2c25" stroke="#c9a54b" stroke-width="2.600"/><circle cx="280.500" cy="190.500" r="2.400" fill="#8d6a4a"/><path d="M243 203l6-5 9 2.500 3 3z" fill="#d2602a"/><path d="M262 203q3-6 10-5.500l5 5.500z" fill="#e3a680"/><path d="M283 196l6 7" stroke="#9a9a9a" stroke-width=".8"/><path d="M320 203.500q1.500-5 6-5.500v6z" fill="#3a1f18"/><circle cx="256" cy="187" r=".9" fill="#5a3d2e"/><circle cx="259.500" cy="190.500" r=".8" fill="#5a3d2e"/><circle cx="262" cy="186.500" r=".7" fill="#5a3d2e"/><circle cx="257.500" cy="193" r=".7" fill="#5a3d2e"/></g></g><rect x="0" y="0" width="1" height="203" fill="#4a4a4a"/><rect x="356.400" y="0" width="3.600" height="203" fill="#eef1ee"/><rect x="357.400" y="2" width="1.800" height="82" fill="#c9cfca"/></svg><svg class="b" style="left:1553px;top:294px" width="360" height="203" viewBox="0 0 360 203"><rect x="0" y="0" width="360" height="203" fill="#fff"/><rect x="1" y="115" width="355.4" height="88" fill="#f3f8f5"/><text x="32.6" y="6.6" font-family='"Liberation Sans",sans-serif' font-size="3.9" fill="#222" textLength="58" lengthAdjust="spacingAndGlyphs">Free shipping with $75 purchase!</text><circle cx="293.6" cy="5" r="2.3" fill="none" stroke="#555" stroke-width=".5"/><rect x="299" y="2.3" width="26" height="5" fill="#fff" stroke="#8a8f94" stroke-width=".5"/><text x="301" y="6" font-family='"Liberation Sans",sans-serif' font-size="2.8" fill="#333">USD</text><path d="M319.5 4.2l1.2 1.3 1.2-1.3" fill="none" stroke="#444" stroke-width=".45"/><rect x="1" y="10" width="355.4" height="16" fill="#111"/><circle cx="37.6" cy="17.9" r="4.2" fill="none" stroke="#5cc2cf" stroke-width="1.1"/><path d="M34.6 16l6 0-3 4.6z" fill="none" stroke="#5cc2cf" stroke-width=".9"/><text x="45.4" y="21" font-family='"Liberation Sans",sans-serif' font-weight="700" font-size="6.6" fill="#fff" textLength="18.6" lengthAdjust="spacingAndGlyphs">ONLINE</text><text x="64.3" y="21" font-family='"Liberation Sans",sans-serif' font-size="6.6" fill="#777" textLength="22.5" lengthAdjust="spacingAndGlyphs">BOUTIQUE</text><path d="M293 10v16M325 10v16" stroke="#3a3a3a" stroke-width=".5"/><circle cx="308.8" cy="14.6" r="1.7" fill="none" stroke="#bbb" stroke-width=".5"/><text x="305.8" y="21.5" font-family='"Liberation Sans",sans-serif' font-size="2.8" fill="#999">Cart</text><g clip-path="url(#hc)"><g transform="translate(-.5 24) scale(.14091)"><rect x="0" y="0" width="2570" height="660" fill="url(#hg)"/><g filter="url(#z2)"><rect x="-20" y="-20" width="500" height="230" fill="#70729d"/><rect x="130" y="0" width="300" height="385" fill="#93a6cf"/><rect x="790" y="0" width="200" height="540" fill="#a3cfec"/><rect x="1590" y="0" width="115" height="660" fill="#b3d6ea"/><path d="M480 450L1040 430V660H700Z" fill="#6fb2e0"/><path d="M-20 410L500 560 1010 670H-20Z" fill="#97724f"/><path d="M2150 -10H2580V150Z" fill="#7f7a95"/><rect x="1040" y="470" width="600" height="200" fill="#4f8498"/><rect x="1380" y="470" width="130" height="200" fill="#527888"/></g><g filter="url(#z1)"><path d="M1040 530h36v130h-36z" fill="#3b72c2"/><path d="M1080 530h32v130h-32z" fill="#c9a93a"/><path d="M1112 530h30v130h-30z" fill="#6ba242"/><path d="M1210 530h26v130h-26z" fill="#6ba242"/><path d="M1100 0h72v90h-72z" fill="#3d74c6"/><path d="M1175 0h42v80h-42z" fill="#62a546"/><path d="M150 60H420M150 95H420M150 130H420M150 165H420M150 200H420M150 235H420M150 270H420M150 305H420" stroke="#cfdbf0" stroke-width="11" opacity=".6"/><g filter="url(#z15)"><path d="M85 150V400Q85 478 200 478H420Q482 478 482 420V240" fill="none" stroke="#403d3f" stroke-width="96"/><path d="M40 168H215" stroke="#454244" stroke-width="44"/><path d="M85 170V395Q85 440 200 440H400" fill="none" stroke="#5a5657" stroke-width="14"/></g><path d="M640 0H782L792 90H650Z" fill="#30383d"/><path d="M465 110Q480 50 560 30L700 60 885 130 880 300 862 400 470 330Z" fill="#34434a"/><path d="M480 100Q500 50 560 38L650 60Q640 130 540 165Q490 160 480 100Z" fill="#272d31"/><path d="M468 305L862 392 860 442 468 352Z" fill="#191f23"/><path d="M520 215L530 400M545 250L550 400" stroke="#22282c" stroke-width="7"/><path d="M990 0H1085L1060 120H985Z" fill="#2f3b41"/><path d="M978 80Q1040 30 1180 60L1330 10 1560 55 1592 100 1612 380 1560 440H1040L1000 200Z" fill="#303f46"/><path d="M1040 428L1642 438V472H1040Z" fill="#181e22"/><path d="M1040 488L1905 498V522L1040 512Z" fill="#20272b"/><path d="M1150 440V520M1215 440V525" stroke="#2a3136" stroke-width="9"/><path d="M1655 0L1715 150Q1730 330 1760 490L1680 505 1690 560 2580 650V0H2540Q2330 150 2200 125Q2080 160 1745 20L1740 0Z" fill="url(#rs)"/><path d="M1740 0L1750 60Q1900 200 2085 152Q2010 110 1960 60L1900 0Z" fill="#2b3135"/><path d="M1680 500L2580 565V660H1770L1760 575 1690 560Z" fill="#1e2428"/><path d="M1990 545L2580 590V612L2000 568Z" fill="#3e8c98"/><path d="M1982 290H2058L2072 382H2000Z" fill="#9fa19f"/><path d="M2005 380L2020 625M2075 382L2100 630" stroke="#33383c" stroke-width="9"/></g><rect x="0" y="0" width="2570" height="660" fill="#12607a" opacity=".2"/><rect x="0" y="0" width="2570" height="660" fill="url(#hv)"/></g></g><g fill="none" stroke="#fff" stroke-width="1.5" stroke-linecap="square"><path d="M152 45H205.600L199.500 57.500M152 45L158 57.500"/><path d="M155.500 57.800l-2.400 -3.600M202 57.800l2.400 -3.600" stroke-width="1.100"/><path d="M170 44.200Q178.700 41.200 187.500 44.200" stroke-width="1"/><path d="M154.700 82.600Q159 91 168.300 93.600M202.600 82.600Q198.300 91 189 93.600" stroke-width="1"/><path d="M173.800 83.300L178.700 90.400 183.700 83.300" stroke-width="1.700"/></g><text x="164.500" y="56.600" font-family='"Liberation Serif",serif' font-style="italic" font-size="10" fill="#fff" textLength="28" lengthAdjust="spacingAndGlyphs">Online</text><text x="141.400" y="78.600" font-family='"Liberation Sans",sans-serif' font-weight="700" font-size="24.200" fill="#fff" stroke="#fff" stroke-width=".5" textLength="74" lengthAdjust="spacingAndGlyphs">BOUTIQUE</text><text x="170.500" y="97.300" font-family='"Liberation Sans",sans-serif' font-size="3" fill="#fff" textLength="16.500" lengthAdjust="spacing">EST. 2019</text><path d="M164.500 128.500L189 153M192.800 128.500L168.300 153" stroke="#111" stroke-width=".8"/><path d="M163.600 127.300l4.600 1.200-3.400 3.400zM194.400 127.300l-4.600 1.200 3.400 3.400z" fill="#111"/><path d="M165.500 150l3.600 .8-.8 3.600M192.500 150l-3.600 .8 .8 3.600M167.500 148.300l3.200 .7-.7 3.200M190.500 148.300l-3.200 .7 .7 3.200" fill="none" stroke="#111" stroke-width="1.100"/><text x="172" y="133.600" font-family='"Liberation Serif",serif' font-style="italic" font-size="6" fill="#222" textLength="9" lengthAdjust="spacingAndGlyphs">Hot</text><text x="157.700" y="145.200" font-family='"Liberation Sans",sans-serif' font-weight="700" font-size="14.300" fill="#111" stroke="#111" stroke-width=".45" textLength="42" lengthAdjust="spacingAndGlyphs">PRODUCTS</text><g clip-path="url(#p1)"><rect x="32.600" y="166.300" width="92.400" height="37" fill="#e9e9ed"/><rect x="61.600" y="166.300" width="32.700" height="16" fill="#f1f2f6"/><g filter="url(#b0)"><path d="M57 176.500l1.500-1.500 1.500 5.500h33.500l1-6.500 2.500 1 1.500 8.500 1.500 1.500v18H60.500v-17.500z" fill="#19191b"/><path d="M55.500 176v9" stroke="#2a2a2c" stroke-width="1.600"/><circle cx="66.500" cy="188.500" r="2.600" fill="#2b2b2e"/><circle cx="93.500" cy="188.500" r="2.600" fill="#2b2b2e"/><path d="M71 188.800q8.500-6 17 0q-8.500 5.500-17 0z" fill="#e4e5e9"/><path d="M64 196.500h32" stroke="#6a5a34" stroke-width=".8" stroke-dasharray="1.500 1.500"/></g></g><g clip-path="url(#p2)"><rect x="132.900" y="166.300" width="92.200" height="37" fill="#e6e4e3"/><g filter="url(#b0)"><path d="M155 174q0-5 5-5.500l11-.8q4 0 4.600 4.500v31H155z" fill="#2b2521"/><path d="M164 184l24.500 7.500v13H164z" fill="#332d28"/><path d="M168 186v18M172 187.500v17M176 188.500v16M180 190v14M184 191v13" stroke="#1f1b18" stroke-width=".9"/><path d="M183.500 190q5.500-3 10.500 0v14h-10.500z" fill="#3b3733"/><circle cx="191.400" cy="187.400" r="2.400" fill="#45413e"/><circle cx="158.500" cy="200.500" r="1.700" fill="#8a7a5a"/><path d="M159 172v28" stroke="#4a3d33" stroke-width=".7"/></g></g><g clip-path="url(#p3)"><rect x="233" y="166.300" width="92.500" height="37" fill="#e4e8ed"/><rect x="233" y="166.300" width="92.500" height="14" fill="#eceff3"/><path d="M250 182.300h76M254 196h72" stroke="#cdd2d9" stroke-width=".7"/><g filter="url(#b0)"><circle cx="244.200" cy="179.100" r="7.400" fill="#c1c5cb"/><circle cx="244.600" cy="179.300" r="4.900" fill="#6b4d3b"/><circle cx="237.500" cy="192" r="7" fill="#a4aab4"/><circle cx="237.500" cy="192" r="4.400" fill="#7a828c"/><circle cx="280" cy="190" r="7.400" fill="#3a2c25" stroke="#c9a54b" stroke-width="2.600"/><circle cx="280.500" cy="190.500" r="2.400" fill="#8d6a4a"/><path d="M243 203l6-5 9 2.500 3 3z" fill="#d2602a"/><path d="M262 203q3-6 10-5.500l5 5.500z" fill="#e3a680"/><path d="M283 196l6 7" stroke="#9a9a9a" stroke-width=".8"/><path d="M320 203.500q1.500-5 6-5.500v6z" fill="#3a1f18"/><circle cx="256" cy="187" r=".9" fill="#5a3d2e"/><circle cx="259.500" cy="190.500" r=".8" fill="#5a3d2e"/><circle cx="262" cy="186.500" r=".7" fill="#5a3d2e"/><circle cx="257.500" cy="193" r=".7" fill="#5a3d2e"/></g></g><rect x="0" y="0" width="1" height="203" fill="#4a4a4a"/><rect x="356.400" y="0" width="3.600" height="203" fill="#eef1ee"/><rect x="357.400" y="2" width="1.800" height="82" fill="#c9cfca"/></svg><svg class="b" style="left:1913px;top:294px" width="327" height="203" viewBox="0 0 327 203"><rect x="0" y="0" width="360" height="203" fill="#fff"/><rect x="1" y="115" width="355.4" height="88" fill="#f3f8f5"/><text x="32.6" y="6.6" font-family='"Liberation Sans",sans-serif' font-size="3.9" fill="#222" textLength="58" lengthAdjust="spacingAndGlyphs">Free shipping with $75 purchase!</text><circle cx="293.6" cy="5" r="2.3" fill="none" stroke="#555" stroke-width=".5"/><rect x="299" y="2.3" width="26" height="5" fill="#fff" stroke="#8a8f94" stroke-width=".5"/><text x="301" y="6" font-family='"Liberation Sans",sans-serif' font-size="2.8" fill="#333">USD</text><path d="M319.5 4.2l1.2 1.3 1.2-1.3" fill="none" stroke="#444" stroke-width=".45"/><rect x="1" y="10" width="355.4" height="16" fill="#111"/><circle cx="37.6" cy="17.9" r="4.2" fill="none" stroke="#5cc2cf" stroke-width="1.1"/><path d="M34.6 16l6 0-3 4.6z" fill="none" stroke="#5cc2cf" stroke-width=".9"/><text x="45.4" y="21" font-family='"Liberation Sans",sans-serif' font-weight="700" font-size="6.6" fill="#fff" textLength="18.6" lengthAdjust="spacingAndGlyphs">ONLINE</text><text x="64.3" y="21" font-family='"Liberation Sans",sans-serif' font-size="6.6" fill="#777" textLength="22.5" lengthAdjust="spacingAndGlyphs">BOUTIQUE</text><path d="M293 10v16M325 10v16" stroke="#3a3a3a" stroke-width=".5"/><circle cx="308.8" cy="14.6" r="1.7" fill="none" stroke="#bbb" stroke-width=".5"/><text x="305.8" y="21.5" font-family='"Liberation Sans",sans-serif' font-size="2.8" fill="#999">Cart</text><g clip-path="url(#hc)"><g transform="translate(-.5 24) scale(.14091)"><rect x="0" y="0" width="2570" height="660" fill="url(#hg)"/><g filter="url(#z2)"><rect x="-20" y="-20" width="500" height="230" fill="#70729d"/><rect x="130" y="0" width="300" height="385" fill="#93a6cf"/><rect x="790" y="0" width="200" height="540" fill="#a3cfec"/><rect x="1590" y="0" width="115" height="660" fill="#b3d6ea"/><path d="M480 450L1040 430V660H700Z" fill="#6fb2e0"/><path d="M-20 410L500 560 1010 670H-20Z" fill="#97724f"/><path d="M2150 -10H2580V150Z" fill="#7f7a95"/><rect x="1040" y="470" width="600" height="200" fill="#4f8498"/><rect x="1380" y="470" width="130" height="200" fill="#527888"/></g><g filter="url(#z1)"><path d="M1040 530h36v130h-36z" fill="#3b72c2"/><path d="M1080 530h32v130h-32z" fill="#c9a93a"/><path d="M1112 530h30v130h-30z" fill="#6ba242"/><path d="M1210 530h26v130h-26z" fill="#6ba242"/><path d="M1100 0h72v90h-72z" fill="#3d74c6"/><path d="M1175 0h42v80h-42z" fill="#62a546"/><path d="M150 60H420M150 95H420M150 130H420M150 165H420M150 200H420M150 235H420M150 270H420M150 305H420" stroke="#cfdbf0" stroke-width="11" opacity=".6"/><g filter="url(#z15)"><path d="M85 150V400Q85 478 200 478H420Q482 478 482 420V240" fill="none" stroke="#403d3f" stroke-width="96"/><path d="M40 168H215" stroke="#454244" stroke-width="44"/><path d="M85 170V395Q85 440 200 440H400" fill="none" stroke="#5a5657" stroke-width="14"/></g><path d="M640 0H782L792 90H650Z" fill="#30383d"/><path d="M465 110Q480 50 560 30L700 60 885 130 880 300 862 400 470 330Z" fill="#34434a"/><path d="M480 100Q500 50 560 38L650 60Q640 130 540 165Q490 160 480 100Z" fill="#272d31"/><path d="M468 305L862 392 860 442 468 352Z" fill="#191f23"/><path d="M520 215L530 400M545 250L550 400" stroke="#22282c" stroke-width="7"/><path d="M990 0H1085L1060 120H985Z" fill="#2f3b41"/><path d="M978 80Q1040 30 1180 60L1330 10 1560 55 1592 100 1612 380 1560 440H1040L1000 200Z" fill="#303f46"/><path d="M1040 428L1642 438V472H1040Z" fill="#181e22"/><path d="M1040 488L1905 498V522L1040 512Z" fill="#20272b"/><path d="M1150 440V520M1215 440V525" stroke="#2a3136" stroke-width="9"/><path d="M1655 0L1715 150Q1730 330 1760 490L1680 505 1690 560 2580 650V0H2540Q2330 150 2200 125Q2080 160 1745 20L1740 0Z" fill="url(#rs)"/><path d="M1740 0L1750 60Q1900 200 2085 152Q2010 110 1960 60L1900 0Z" fill="#2b3135"/><path d="M1680 500L2580 565V660H1770L1760 575 1690 560Z" fill="#1e2428"/><path d="M1990 545L2580 590V612L2000 568Z" fill="#3e8c98"/><path d="M1982 290H2058L2072 382H2000Z" fill="#9fa19f"/><path d="M2005 380L2020 625M2075 382L2100 630" stroke="#33383c" stroke-width="9"/></g><rect x="0" y="0" width="2570" height="660" fill="#12607a" opacity=".2"/><rect x="0" y="0" width="2570" height="660" fill="url(#hv)"/></g></g><g fill="none" stroke="#fff" stroke-width="1.5" stroke-linecap="square"><path d="M152 45H205.600L199.500 57.500M152 45L158 57.500"/><path d="M155.500 57.800l-2.400 -3.600M202 57.800l2.400 -3.600" stroke-width="1.100"/><path d="M170 44.200Q178.700 41.200 187.500 44.200" stroke-width="1"/><path d="M154.700 82.600Q159 91 168.300 93.600M202.600 82.600Q198.300 91 189 93.600" stroke-width="1"/><path d="M173.800 83.300L178.700 90.400 183.700 83.300" stroke-width="1.700"/></g><text x="164.500" y="56.600" font-family='"Liberation Serif",serif' font-style="italic" font-size="10" fill="#fff" textLength="28" lengthAdjust="spacingAndGlyphs">Online</text><text x="141.400" y="78.600" font-family='"Liberation Sans",sans-serif' font-weight="700" font-size="24.200" fill="#fff" stroke="#fff" stroke-width=".5" textLength="74" lengthAdjust="spacingAndGlyphs">BOUTIQUE</text><text x="170.500" y="97.300" font-family='"Liberation Sans",sans-serif' font-size="3" fill="#fff" textLength="16.500" lengthAdjust="spacing">EST. 2019</text><path d="M164.500 128.500L189 153M192.800 128.500L168.300 153" stroke="#111" stroke-width=".8"/><path d="M163.600 127.300l4.600 1.200-3.400 3.400zM194.400 127.300l-4.600 1.200 3.400 3.400z" fill="#111"/><path d="M165.500 150l3.600 .8-.8 3.600M192.500 150l-3.600 .8 .8 3.600M167.500 148.300l3.200 .7-.7 3.200M190.500 148.300l-3.200 .7 .7 3.200" fill="none" stroke="#111" stroke-width="1.100"/><text x="172" y="133.600" font-family='"Liberation Serif",serif' font-style="italic" font-size="6" fill="#222" textLength="9" lengthAdjust="spacingAndGlyphs">Hot</text><text x="157.700" y="145.200" font-family='"Liberation Sans",sans-serif' font-weight="700" font-size="14.300" fill="#111" stroke="#111" stroke-width=".45" textLength="42" lengthAdjust="spacingAndGlyphs">PRODUCTS</text><g clip-path="url(#p1)"><rect x="32.600" y="166.300" width="92.400" height="37" fill="#e9e9ed"/><rect x="61.600" y="166.300" width="32.700" height="16" fill="#f1f2f6"/><g filter="url(#b0)"><path d="M57 176.500l1.500-1.500 1.500 5.500h33.500l1-6.500 2.500 1 1.500 8.500 1.500 1.500v18H60.500v-17.500z" fill="#19191b"/><path d="M55.500 176v9" stroke="#2a2a2c" stroke-width="1.600"/><circle cx="66.500" cy="188.500" r="2.600" fill="#2b2b2e"/><circle cx="93.500" cy="188.500" r="2.600" fill="#2b2b2e"/><path d="M71 188.800q8.500-6 17 0q-8.500 5.500-17 0z" fill="#e4e5e9"/><path d="M64 196.500h32" stroke="#6a5a34" stroke-width=".8" stroke-dasharray="1.500 1.500"/></g></g><g clip-path="url(#p2)"><rect x="132.900" y="166.300" width="92.200" height="37" fill="#e6e4e3"/><g filter="url(#b0)"><path d="M155 174q0-5 5-5.500l11-.8q4 0 4.600 4.500v31H155z" fill="#2b2521"/><path d="M164 184l24.500 7.500v13H164z" fill="#332d28"/><path d="M168 186v18M172 187.500v17M176 188.500v16M180 190v14M184 191v13" stroke="#1f1b18" stroke-width=".9"/><path d="M183.500 190q5.500-3 10.500 0v14h-10.500z" fill="#3b3733"/><circle cx="191.400" cy="187.400" r="2.400" fill="#45413e"/><circle cx="158.500" cy="200.500" r="1.700" fill="#8a7a5a"/><path d="M159 172v28" stroke="#4a3d33" stroke-width=".7"/></g></g><g clip-path="url(#p3)"><rect x="233" y="166.300" width="92.500" height="37" fill="#e4e8ed"/><rect x="233" y="166.300" width="92.500" height="14" fill="#eceff3"/><path d="M250 182.300h76M254 196h72" stroke="#cdd2d9" stroke-width=".7"/><g filter="url(#b0)"><circle cx="244.200" cy="179.100" r="7.400" fill="#c1c5cb"/><circle cx="244.600" cy="179.300" r="4.900" fill="#6b4d3b"/><circle cx="237.500" cy="192" r="7" fill="#a4aab4"/><circle cx="237.500" cy="192" r="4.400" fill="#7a828c"/><circle cx="280" cy="190" r="7.400" fill="#3a2c25" stroke="#c9a54b" stroke-width="2.600"/><circle cx="280.500" cy="190.500" r="2.400" fill="#8d6a4a"/><path d="M243 203l6-5 9 2.500 3 3z" fill="#d2602a"/><path d="M262 203q3-6 10-5.500l5 5.500z" fill="#e3a680"/><path d="M283 196l6 7" stroke="#9a9a9a" stroke-width=".8"/><path d="M320 203.500q1.500-5 6-5.500v6z" fill="#3a1f18"/><circle cx="256" cy="187" r=".9" fill="#5a3d2e"/><circle cx="259.500" cy="190.500" r=".8" fill="#5a3d2e"/><circle cx="262" cy="186.500" r=".7" fill="#5a3d2e"/><circle cx="257.500" cy="193" r=".7" fill="#5a3d2e"/></g></g><rect x="0" y="0" width="1" height="203" fill="#4a4a4a"/><rect x="356.400" y="0" width="3.600" height="203" fill="#eef1ee"/><rect x="357.400" y="2" width="1.800" height="82" fill="#c9cfca"/></svg><div class="b" style="left:114px;top:496px;width:2126px;height:1px;background:#9c9c9c;"></div><div class="t" style="left:272.3px;top:517.0px;font-size:22px;color:#555;letter-spacing:0.479px;">0ms</div><div class="t" style="left:642.6px;top:517.0px;font-size:22px;color:#555;letter-spacing:-0.418px;">1s</div><div class="t" style="left:1002.6px;top:517.0px;font-size:22px;color:#555;letter-spacing:-0.418px;">2s</div><div class="t" style="left:1362.6px;top:517.0px;font-size:22px;color:#555;letter-spacing:-0.418px;">3s</div><div class="t" style="left:1722.6px;top:517.0px;font-size:22px;color:#555;letter-spacing:-0.418px;">4s</div><div class="t" style="left:2082.6px;top:517.0px;font-size:22px;color:#555;letter-spacing:-0.418px;">5s</div>
<div class="b" style="left:2242px;top:224px;width:618px;height:348px;background:linear-gradient(to bottom,#fff 0%,#fff 34%,#fdfdfd 38.100%,#f6f6f6 42.800%,#ececec 47.400%,#d8d8d8 52.300%,#bcbcbc 56.900%,#a0a0a0 61.800%,#858585 66.400%,#686868 71.300%,#4a4a4a 75.900%,#2e2e2e 80.700%,#1a1a1a 85.300%,#0a0a0a 90.200%,#030303 94.800%,#000 100%);"></div><div class="b" style="left:2240px;top:224px;width:2px;height:357px;background:#3c3c3c;"></div><div class="b" style="left:2859px;top:224px;width:1px;height:348px;background:rgba(0,0,0,.42);"></div><div class="t" style="left:2337.8px;top:463.0px;font-size:28px;color:#fff;letter-spacing:0.006px;">0:00 / 0:22</div><div class="b" style="left:2274px;top:524px;width:554px;height:8px;background:#b5b5b5;border-radius:4px;"></div>
<div class="t" style="left:166.6px;top:632.0px;font-size:26px;color:#222;letter-spacing:0.946px;">Business Transactions</div><div class="b" style="left:162px;top:674px;width:2030px;height:60px;background:#4396cf;border-radius:8px;"></div><div class="t" style="left:172.2px;top:691.0px;font-size:28px;color:#fff;letter-spacing:0.306px;">Synthetic transaction 1</div><div class="b" style="left:156px;top:752px;width:2042px;height:2px;background:#747474;"></div><div class="t" style="left:166.6px;top:773.0px;font-size:26px;color:#222;letter-spacing:-0.064px;">Pages</div><div class="b" style="left:162px;top:816px;width:499px;height:60px;background:#8370eb;border-radius:8px;box-shadow:0 0 0 3.500px #fdfdff,0 0 0 8px #8370eb;"></div><div class="b" style="left:672.7px;top:816px;width:498.4px;height:60px;background:#6d5ec2;border-radius:8px;"></div><div class="b" style="left:1183.2px;top:816px;width:498.4px;height:60px;background:#6d5ec2;border-radius:8px;"></div><div class="b" style="left:1693.6px;top:816px;width:498.4px;height:60px;background:#6d5ec2;border-radius:8px;"></div><div class="t" style="left:172.6px;top:833.0px;font-size:28px;color:#fff;letter-spacing:1.151px;">http://34.242.111.159:81/</div><div class="t" style="left:683.0px;top:833.0px;font-size:28px;color:#fff;letter-spacing:1.054px;">http://34.242.111.159:81/product…</div><div class="t" style="left:1193.6px;top:833.0px;font-size:28px;color:#fff;letter-spacing:1.107px;">http://34.242.111.159:81/cart</div><div class="t" style="left:1703.8px;top:833.0px;font-size:28px;color:#fff;letter-spacing:1.105px;">http://34.242.111.159:81/cart/che…</div>
<div class="b" style="left:156px;top:932px;width:405px;height:64px;background:#fbfbfb;border:2px solid #8c8c8c;border-radius:7px;"></div><div class="t" style="left:222.7px;top:951.0px;font-size:28px;color:#6b6b6b;letter-spacing:0.227px;">Search the waterfall</div><div class="b" style="left:583px;top:932px;width:1086px;height:64px;background:#eeeeee;border-radius:9px;"></div><div class="b" style="left:589px;top:938px;width:80px;height:52px;background:#fff;border-radius:7px;box-shadow:0 1px 3px rgba(0,0,0,.12);"></div><div class="t" style="left:613.5px;top:951.0px;font-size:28px;color:#1a1a1a;letter-spacing:-0.206px;">All</div><div class="t" style="left:697.0px;top:951.0px;font-size:28px;color:#4d4d4d;letter-spacing:-1.439px;">XHR</div><div class="t" style="left:804.0px;top:951.0px;font-size:28px;color:#4d4d4d;letter-spacing:-0.338px;">JS</div><div class="t" style="left:889.0px;top:951.0px;font-size:28px;color:#4d4d4d;letter-spacing:-1.591px;">CSS</div><div class="t" style="left:994.5px;top:951.0px;font-size:28px;color:#4d4d4d;letter-spacing:-0.392px;">Img</div><div class="t" style="left:1093.0px;top:951.0px;font-size:28px;color:#4d4d4d;letter-spacing:0.048px;">Media</div><div class="t" style="left:1222.4px;top:951.0px;font-size:28px;color:#4d4d4d;letter-spacing:-0.107px;">Font</div><div class="t" style="left:1331.6px;top:951.0px;font-size:28px;color:#4d4d4d;letter-spacing:-0.131px;">Doc</div><div class="t" style="left:1434.6px;top:951.0px;font-size:28px;color:#4d4d4d;letter-spacing:-1.552px;">WS</div><div class="t" style="left:1529.8px;top:951.0px;font-size:28px;color:#4d4d4d;letter-spacing:0.322px;">Manifest</div>
<div class="b" style="left:156px;top:1024px;width:1958px;height:64px;background:#eeeeee;"></div><div class="b" style="left:156px;top:1088px;width:2042px;height:2px;background:#dadada;"></div><div class="b" style="left:237.8px;top:1024px;width:2.4px;height:66px;background:#f9f9f9;"></div><div class="b" style="left:372.6px;top:1024px;width:2.4px;height:66px;background:#f9f9f9;"></div><div class="b" style="left:860.6px;top:1024px;width:2.4px;height:66px;background:#f9f9f9;"></div><div class="b" style="left:1204px;top:1024px;width:2.4px;height:66px;background:#f9f9f9;"></div><div class="b" style="left:1318px;top:1024px;width:2.4px;height:66px;background:#f9f9f9;"></div><div class="b" style="left:1441px;top:1024px;width:2.4px;height:66px;background:#f9f9f9;"></div><div class="t bd" style="left:256.6px;top:1044.0px;font-size:24px;color:#444;font-weight:700;letter-spacing:-0.832px;">METHOD</div><div class="t bd" style="left:391.4px;top:1044.0px;font-size:24px;color:#444;font-weight:700;letter-spacing:-1.399px;">FILE</div><div class="t bd" style="left:879.5px;top:1044.0px;font-size:24px;color:#444;font-weight:700;letter-spacing:-0.637px;">DOMAIN</div><div class="t bd" style="left:1222.7px;top:1044.0px;font-size:24px;color:#444;font-weight:700;letter-spacing:-0.686px;">SIZE</div><div class="t bd" style="left:1336.9px;top:1044.0px;font-size:24px;color:#444;font-weight:700;letter-spacing:-0.890px;">STATUS</div><div class="b" style="left:156px;top:1142px;width:2042px;height:2px;background:#dddddd;"></div><div class="b" style="left:156px;top:1196px;width:2042px;height:2px;background:#dddddd;"></div><div class="b" style="left:156px;top:1250px;width:2042px;height:2px;background:#dddddd;"></div><div class="b" style="left:156px;top:1304px;width:2042px;height:2px;background:#dddddd;"></div><div class="b" style="left:156px;top:1358px;width:2042px;height:2px;background:#dddddd;"></div><div class="b" style="left:156px;top:1412px;width:2042px;height:2px;background:#dddddd;"></div><div class="b" style="left:156px;top:1466px;width:2042px;height:2px;background:#dddddd;"></div><div class="b" style="left:156px;top:1520px;width:2042px;height:2px;background:#dddddd;"></div><div class="b" style="left:156px;top:1574px;width:2042px;height:2px;background:#dddddd;"></div><div class="b" style="left:156px;top:1628px;width:2042px;height:2px;background:#dddddd;"></div><div class="b" style="left:156px;top:1024px;width:2px;height:606px;background:#dddddd;"></div><div class="b" style="left:1441px;top:1090px;width:2px;height:540px;background:#dddddd;"></div><div class="b" style="left:2114px;top:1090px;width:2px;height:540px;background:#dddddd;"></div><div class="b" style="left:2196px;top:1024px;width:2px;height:606px;background:#dddddd;"></div><div class="t" style="left:281.0px;top:1103.0px;font-size:28px;color:#444;letter-spacing:-2.186px;">GET</div><div class="t" style="left:374.2px;top:1103.0px;font-size:28px;color:#444;letter-spacing:1.151px;">http://34.242.111.159:81/</div><div class="t" style="left:783.5px;top:1103.0px;font-size:28px;color:#1f5fd6;letter-spacing:-1.259px;">APM</div><div class="t" style="left:862.4px;top:1103.0px;font-size:28px;color:#444;letter-spacing:0.388px;">34.242.111.159:81</div><div class="t" style="left:1223.3px;top:1103.0px;font-size:28px;color:#444;letter-spacing:-0.704px;">10.7 KB</div><div class="b" style="left:1342px;top:1099.3px;width:76px;height:36px;background:#9aae36;border-radius:5px;"></div><div class="t bd" style="left:1359.4px;top:1107.0px;font-size:22px;color:#fff;font-weight:700;letter-spacing:1.631px;">200</div><div class="b" style="left:1443.4px;top:1090px;width:8.6px;height:52px;background:#d08a5c;"></div><div class="b" style="left:1452px;top:1090px;width:10.2px;height:52px;background:#4da6f5;"></div><div class="t" style="left:281.0px;top:1157.0px;font-size:28px;color:#444;letter-spacing:-2.186px;">GET</div><div class="t" style="left:374.2px;top:1157.0px;font-size:28px;color:#444;letter-spacing:0.305px;">bootstrap.min.css</div><div class="t" style="left:862.4px;top:1157.0px;font-size:28px;color:#444;letter-spacing:0.467px;">stackpath.bootstrapcdn.…</div><div class="t" style="left:1206.5px;top:1157.0px;font-size:28px;color:#444;letter-spacing:-0.425px;">137.6 KB</div><div class="b" style="left:1342px;top:1153.3px;width:76px;height:36px;background:#9aae36;border-radius:5px;"></div><div class="t bd" style="left:1359.4px;top:1161.0px;font-size:22px;color:#fff;font-weight:700;letter-spacing:1.631px;">200</div><div class="b" style="left:1464.2px;top:1144px;width:1px;height:52px;background:#75757d;"></div><div class="b" style="left:1465.2px;top:1144px;width:4px;height:52px;background:#d08a5c;"></div><div class="b" style="left:1469.2px;top:1144px;width:6.5px;height:52px;background:#4da6f5;"></div><div class="t" style="left:281.0px;top:1211.0px;font-size:28px;color:#444;letter-spacing:-2.186px;">GET</div><div class="t" style="left:374.2px;top:1211.0px;font-size:28px;color:#444;letter-spacing:0.284px;">css?family=Roboto:300,400,500,700</div><div class="t" style="left:862.4px;top:1211.0px;font-size:28px;color:#444;letter-spacing:0.085px;">fonts.googleapis.com</div><div class="t" style="left:1238.7px;top:1211.0px;font-size:28px;color:#444;letter-spacing:-0.809px;">8.3 KB</div><div class="b" style="left:1342px;top:1207.3px;width:76px;height:36px;background:#9aae36;border-radius:5px;"></div><div class="t bd" style="left:1359.4px;top:1215.0px;font-size:22px;color:#fff;font-weight:700;letter-spacing:1.631px;">200</div><div class="b" style="left:1464.7px;top:1198px;width:1px;height:52px;background:#75757d;"></div><div class="b" style="left:1465.7px;top:1198px;width:4.8px;height:52px;background:#d08a5c;"></div><div class="b" style="left:1470.5px;top:1198px;width:1.5px;height:52px;background:#4da6f5;"></div><div class="t" style="left:281.0px;top:1265.0px;font-size:28px;color:#444;letter-spacing:-2.186px;">GET</div><div class="t" style="left:374.2px;top:1265.0px;font-size:28px;color:#444;letter-spacing:0.025px;">styles.css</div><div class="t" style="left:783.5px;top:1265.0px;font-size:28px;color:#1f5fd6;letter-spacing:-1.259px;">APM</div><div class="t" style="left:862.4px;top:1265.0px;font-size:28px;color:#444;letter-spacing:0.388px;">34.242.111.159:81</div><div class="t" style="left:1238.7px;top:1265.0px;font-size:28px;color:#444;letter-spacing:-0.809px;">9.2 KB</div><div class="b" style="left:1342px;top:1261.3px;width:76px;height:36px;background:#9aae36;border-radius:5px;"></div><div class="t bd" style="left:1359.4px;top:1269.0px;font-size:22px;color:#fff;font-weight:700;letter-spacing:1.631px;">200</div><div class="b" style="left:1465px;top:1252px;width:1px;height:52px;background:#75757d;"></div><div class="b" style="left:1466px;top:1252px;width:9.5px;height:52px;background:#4da6f5;"></div><div class="t" style="left:281.0px;top:1319.0px;font-size:28px;color:#444;letter-spacing:-2.186px;">GET</div><div class="t" style="left:374.2px;top:1319.0px;font-size:28px;color:#444;letter-spacing:0.318px;">cart.css</div><div class="t" style="left:783.5px;top:1319.0px;font-size:28px;color:#1f5fd6;letter-spacing:-1.259px;">APM</div><div class="t" style="left:862.4px;top:1319.0px;font-size:28px;color:#444;letter-spacing:0.388px;">34.242.111.159:81</div><div class="t" style="left:1240.4px;top:1319.0px;font-size:28px;color:#444;letter-spacing:-1.143px;">1.3 KB</div><div class="b" style="left:1342px;top:1315.3px;width:76px;height:36px;background:#9aae36;border-radius:5px;"></div><div class="t bd" style="left:1359.4px;top:1323.0px;font-size:22px;color:#fff;font-weight:700;letter-spacing:1.631px;">200</div><div class="b" style="left:1465px;top:1306px;width:1px;height:52px;background:#75757d;"></div><div class="b" style="left:1466px;top:1306px;width:9.5px;height:52px;background:#4da6f5;"></div><div class="t" style="left:281.0px;top:1373.0px;font-size:28px;color:#444;letter-spacing:-2.186px;">GET</div><div class="t" style="left:374.2px;top:1373.0px;font-size:28px;color:#444;letter-spacing:0.044px;">order.css</div><div class="t" style="left:783.5px;top:1373.0px;font-size:28px;color:#1f5fd6;letter-spacing:-1.259px;">APM</div><div class="t" style="left:862.4px;top:1373.0px;font-size:28px;color:#444;letter-spacing:0.388px;">34.242.111.159:81</div><div class="t" style="left:1245.6px;top:1373.0px;font-size:28px;color:#444;letter-spacing:-0.014px;">391 B</div><div class="b" style="left:1342px;top:1369.3px;width:76px;height:36px;background:#9aae36;border-radius:5px;"></div><div class="t bd" style="left:1359.4px;top:1377.0px;font-size:22px;color:#fff;font-weight:700;letter-spacing:1.631px;">200</div><div class="b" style="left:1465px;top:1360px;width:1px;height:52px;background:#75757d;"></div><div class="b" style="left:1466px;top:1360px;width:9px;height:52px;background:#d08a5c;"></div><div class="b" style="left:1475px;top:1360px;width:9px;height:52px;background:#4da6f5;"></div><div class="t" style="left:281.0px;top:1427.0px;font-size:28px;color:#444;letter-spacing:-2.186px;">GET</div><div class="t" style="left:374.2px;top:1427.0px;font-size:28px;color:#444;letter-spacing:0.272px;">splunk-otel-web.js</div><div class="t" style="left:862.4px;top:1427.0px;font-size:28px;color:#444;letter-spacing:0.091px;">cdn.signalfx.com</div><div class="t" style="left:1207.0px;top:1427.0px;font-size:28px;color:#444;letter-spacing:-0.500px;">168.6 KB</div><div class="b" style="left:1342px;top:1423.3px;width:76px;height:36px;background:#9aae36;border-radius:5px;"></div><div class="t bd" style="left:1359.4px;top:1431.0px;font-size:22px;color:#fff;font-weight:700;letter-spacing:1.631px;">200</div><div class="b" style="left:1464.7px;top:1414px;width:1.3px;height:52px;background:#75757d;"></div><div class="b" style="left:1466px;top:1414px;width:3px;height:52px;background:#9b6fd0;"></div><div class="b" style="left:1469px;top:1414px;width:2px;height:52px;background:#d08a5c;"></div><div class="t" style="left:281.0px;top:1481.0px;font-size:28px;color:#444;letter-spacing:-2.186px;">GET</div><div class="t" style="left:374.2px;top:1481.0px;font-size:28px;color:#444;letter-spacing:0.304px;">bootstrap.min.js</div><div class="t" style="left:862.4px;top:1481.0px;font-size:28px;color:#444;letter-spacing:0.467px;">stackpath.bootstrapcdn.…</div><div class="t" style="left:1222.2px;top:1481.0px;font-size:28px;color:#444;letter-spacing:-0.518px;">49.5 KB</div><div class="b" style="left:1342px;top:1477.3px;width:76px;height:36px;background:#9aae36;border-radius:5px;"></div><div class="t bd" style="left:1359.4px;top:1485.0px;font-size:22px;color:#fff;font-weight:700;letter-spacing:1.631px;">200</div><div class="b" style="left:1474px;top:1468px;width:11px;height:52px;background:#75757d;"></div><div class="b" style="left:1485px;top:1468px;width:6px;height:52px;background:#4da6f5;"></div><div class="t" style="left:281.0px;top:1535.0px;font-size:28px;color:#444;letter-spacing:-2.186px;">GET</div><div class="t" style="left:374.2px;top:1535.0px;font-size:28px;color:#444;letter-spacing:0.161px;">Hipster_CurrencyIcon.svg</div><div class="t" style="left:783.5px;top:1535.0px;font-size:28px;color:#1f5fd6;letter-spacing:-1.259px;">APM</div><div class="t" style="left:862.4px;top:1535.0px;font-size:28px;color:#444;letter-spacing:0.388px;">34.242.111.159:81</div><div class="t" style="left:1245.6px;top:1535.0px;font-size:28px;color:#444;letter-spacing:-0.014px;">693 B</div><div class="b" style="left:1342px;top:1531.3px;width:76px;height:36px;background:#9aae36;border-radius:5px;"></div><div class="t bd" style="left:1359.4px;top:1539.0px;font-size:22px;color:#fff;font-weight:700;letter-spacing:1.631px;">200</div><div class="b" style="left:1480.7px;top:1522px;width:17.8px;height:52px;background:#75757d;"></div><div class="b" style="left:1498.5px;top:1522px;width:9.1px;height:52px;background:#4da6f5;"></div><div class="t" style="left:281.0px;top:1589.0px;font-size:28px;color:#444;letter-spacing:-2.186px;">GET</div><div class="t" style="left:374.2px;top:1589.0px;font-size:28px;color:#444;letter-spacing:0.277px;">Hipster_DownArrow.svg</div><div class="t" style="left:783.5px;top:1589.0px;font-size:28px;color:#1f5fd6;letter-spacing:-1.259px;">APM</div><div class="t" style="left:862.4px;top:1589.0px;font-size:28px;color:#444;letter-spacing:0.388px;">34.242.111.159:81</div><div class="t" style="left:1246.2px;top:1589.0px;font-size:28px;color:#444;letter-spacing:-0.174px;">280 B</div><div class="b" style="left:1342px;top:1585.3px;width:76px;height:36px;background:#9aae36;border-radius:5px;"></div><div class="t bd" style="left:1359.4px;top:1593.0px;font-size:22px;color:#fff;font-weight:700;letter-spacing:1.631px;">200</div><div class="b" style="left:1483.8px;top:1576px;width:20.2px;height:52px;background:#75757d;"></div><div class="b" style="left:1504px;top:1576px;width:8.8px;height:52px;background:#4da6f5;"></div>
<div class="b" style="left:2240px;top:581px;width:2px;height:1049px;background:#dcdcdc;"></div><div class="t" style="left:2272.6px;top:627.0px;font-size:24px;color:#222;letter-spacing:0.979px;">http://34.242.111.159:81/</div><div class="b" style="left:2242px;top:695px;width:618px;height:2px;background:#dcdcdc;"></div><div class="b" style="left:2274px;top:728px;width:546px;height:64px;background:#fbfbfb;border:2px solid #8c8c8c;border-radius:8px;"></div><div class="t" style="left:2340.8px;top:746.0px;font-size:28px;color:#6b6b6b;letter-spacing:0.234px;">Search metrics</div><div class="t bd" style="left:2275.0px;top:839.0px;font-size:28px;color:#222;font-weight:700;letter-spacing:-0.698px;">Web vitals</div><div class="t" style="left:2274.6px;top:921.0px;font-size:24px;color:#4a4a4a;letter-spacing:0.051px;">Jul 27, 10:59am - 11:29am</div><div class="t" style="left:2746.0px;top:921.0px;font-size:24px;color:#4a4a4a;letter-spacing:-0.243px;">Visits: 0</div><div class="t" style="left:2274.6px;top:1013.0px;font-size:24px;color:#222;letter-spacing:0.112px;">Largest contentful paint (LCP)</div><div class="t" style="left:2735.1px;top:1010.0px;font-size:28px;color:#4a7c1f;letter-spacing:0.097px;">761 ms</div><div class="b" style="left:2274px;top:1076px;width:554px;height:33.5px;background:#f0f0f0;border:2px solid #808080;"></div><div class="b" style="left:2457px;top:1076px;width:2px;height:33.5px;background:#808080;"></div><div class="b" style="left:2642.7px;top:1076px;width:2px;height:33.5px;background:#808080;"></div><div class="t" style="left:2322.8px;top:1146.0px;font-size:24px;color:#6b6b6b;letter-spacing:-0.317px;">No users</div><div class="t" style="left:2274.6px;top:1231.0px;font-size:24px;color:#222;letter-spacing:0.064px;">Total blocking time (TBT)</div><div class="t" style="left:2775.5px;top:1228.0px;font-size:28px;color:#4a7c1f;letter-spacing:-0.521px;">0 µs</div><div class="b" style="left:2274px;top:1294px;width:554px;height:33.5px;background:#f0f0f0;border:2px solid #808080;"></div><div class="b" style="left:2457px;top:1294px;width:2px;height:33.5px;background:#808080;"></div><div class="b" style="left:2642.7px;top:1294px;width:2px;height:33.5px;background:#808080;"></div><div class="t" style="left:2322.8px;top:1364.0px;font-size:24px;color:#6b6b6b;letter-spacing:-0.317px;">No users</div><div class="t" style="left:2274.6px;top:1449.0px;font-size:24px;color:#222;letter-spacing:0.007px;">Cumulative layout shift (CLS)</div><div class="t" style="left:2773.3px;top:1446.0px;font-size:28px;color:#4a7c1f;letter-spacing:-0.124px;">0.02</div><div class="b" style="left:2274px;top:1512px;width:554px;height:33.5px;background:#f0f0f0;border:2px solid #808080;"></div><div class="b" style="left:2457px;top:1512px;width:2px;height:33.5px;background:#808080;"></div><div class="b" style="left:2642.7px;top:1512px;width:2px;height:33.5px;background:#808080;"></div><div class="t" style="left:2322.8px;top:1582.0px;font-size:24px;color:#6b6b6b;letter-spacing:-0.317px;">No users</div>
<svg class="ov" width="2860" height="1630" viewBox="0 0 2860 1630"><circle cx="2645.3" cy="51.3" r="10.3" fill="none" stroke="#4d4d4d" stroke-width="4"/><path d="M2652.7 58.7L2660.9 66.9" stroke="#4d4d4d" stroke-width="4" stroke-linecap="round"/><path d="M2728 38V70M2712 54H2744" stroke="#4d4d4d" stroke-width="4" stroke-linecap="round"/><path d="M2796.500 40a2 2 0 0 1 2-2H2817a2 2 0 0 1 2 2V70L2807.800 62.500 2796.500 70Z" fill="none" stroke="#4d4d4d" stroke-width="4" stroke-linejoin="round"/><g fill="none" stroke="#6b6b6b" stroke-width="4" stroke-linejoin="round" stroke-linecap="round"><path d="M56 163L40.3 176.500V193.800H52.300V188Q52.300 184.600 56 184.600Q59.700 184.600 59.700 188V193.800H71.800V176.500Z"/><circle cx="56.1" cy="243.9" r="4"/><circle cx="39.9" cy="259.9" r="4"/><circle cx="72.1" cy="259.9" r="4"/><circle cx="56.1" cy="276.1" r="4"/><path d="M60.300 248L65 252.800M44 255.800L49 251M68.300 264L63.200 268.800M52 272L47.200 267.200" stroke-width="4.600" stroke-linecap="butt"/><circle cx="56.1" cy="326.1" r="4"/><circle cx="44" cy="354.1" r="4"/><circle cx="68" cy="354.1" r="4"/><path d="M56.100 330.500V337.500M44 349.800V337.500H68V349.800" stroke-linecap="butt"/><path d="M64.300 429.800V407a3 3 0 0 0-3-3H43.300a3 3 0 0 0-3 3V429.700a6 6 0 0 0 6 6H67.700a4 4 0 0 0 4-4V429.800H64.300"/><path d="M45.700 411.300H59.200M45.700 418.800H59.200M45.700 425.900H55.600" stroke-width="3.200"/><path d="M56.100 749C50 749 46.900 754 46.900 760V769.500L42.600 775.500Q42 777.200 44 777.200H68.200Q70.200 777.200 69.600 775.500L65.300 769.500V760C65.300 754 62.200 749 56.100 749Z"/><path d="M53 784.100H59.300"/><path d="M56.100 747.200V749" stroke-width="4.600"/><path d="M44 673.500Q33.400 686.200 44 699M68 673.500Q78.600 686.200 68 699M56.100 676.500V688"/><rect x="40.200" y="830.200" width="11.600" height="11.600" rx="1.500"/><rect x="60.400" y="830.200" width="11.600" height="11.600" rx="1.500"/><rect x="40.200" y="850.500" width="11.600" height="11.600" rx="1.500"/><path d="M63.800 858.800V863.600M72 852.800V863.600" stroke-linecap="butt"/><g transform="translate(56 925.700) rotate(-45)"><rect x="-20" y="-7.500" width="40" height="15" rx="1.200"/><path d="M-10 -7.500V-2M0 -7.500V-2M10 -7.500V-2" stroke-width="3.200" stroke-linecap="butt"/></g><ellipse cx="56" cy="992.200" rx="13.500" ry="4.300"/><path d="M42.500 992.200V1017a13.500 6.200 0 0 0 27 0V992.200"/><path d="M51.700 1009.500V1015M59.800 1005.200V1015" stroke-linecap="butt"/><path d="M52.1 1099.3L52.4 1094.6L59.8 1094.6L60.1 1099.3L64.3 1101.8L68.5 1099.7L72.2 1106.0L68.3 1108.6L68.3 1113.6L72.2 1116.2L68.5 1122.5L64.3 1120.4L60.1 1122.9L59.8 1127.6L52.4 1127.6L52.1 1122.9L47.9 1120.4L43.7 1122.5L40.0 1116.2L43.9 1113.6L43.9 1108.6L40.0 1106.0L43.7 1099.7L47.9 1101.8Z"/><circle cx="56.100" cy="1111.100" r="5.300"/></g><circle cx="56.100" cy="695.900" r="2.600" fill="#6b6b6b"/><path d="M63.0 510.8H40.1a2.0 2.0 0 0 1-2.0-2.0V486.3a2.0 2.0 0 0 1 2.0-2.0H68.9a2.0 2.0 0 0 1 2.0 2.0V498.8" fill="none" stroke="#6b6b6b" stroke-width="4" stroke-linecap="butt"/><path d="M38.1 495.0H70.9" stroke="#6b6b6b" stroke-width="3.2"/><circle cx="42.4" cy="489.1" r="1.5" fill="#6b6b6b"/><circle cx="48.2" cy="489.1" r="1.5" fill="#6b6b6b"/><circle cx="53.6" cy="489.1" r="1.5" fill="#6b6b6b"/><circle cx="70.1" cy="507.0" r="4.6" fill="#6b6b6b"/><path d="M62.2 519.9a7.9 6.8 0 0 1 15.8 0z" fill="#6b6b6b"/><rect x="41.100" y="569.400" width="29.800" height="26.700" rx="3.500" fill="#2b2b2b"/><rect x="48.600" y="565.800" width="14.800" height="6" rx="2.500" fill="#2b2b2b"/><rect x="37.400" y="577.400" width="5" height="11" rx="2.300" fill="none" stroke="#2b2b2b" stroke-width="2.600"/><rect x="69.600" y="577.400" width="5" height="11" rx="2.300" fill="none" stroke="#2b2b2b" stroke-width="2.600"/><circle cx="51.500" cy="582.100" r="2.500" fill="#f7f7f7"/><circle cx="60.300" cy="582.100" r="2.500" fill="#f7f7f7"/><circle cx="75.900" cy="1091.700" r="8.200" fill="#2a62d8"/>
<circle cx="158" cy="166" r="18" fill="#4a7c1f"/><path d="M147.500 167L153.800 172.800 167 157" fill="none" stroke="#fff" stroke-width="4"/><path fill-rule="evenodd" fill="#5a5a5a" d="M315.600 153.200a9.600 9.600 0 0 1 9.600 9.600c0 6-6 12-9.600 19.800c-3.600-7.800-9.600-13.800-9.600-19.800a9.600 9.600 0 0 1 9.600-9.600zm0 5.300a4.300 4.300 0 1 0 0 8.600a4.300 4.300 0 1 0 0-8.600z"/><path fill-rule="evenodd" fill="#555" d="M767 157h31v26h-31zm4 9v13h23v-13z"/><path d="M774.500 153v8M790.500 153v8" stroke="#555" stroke-width="3.400"/><circle cx="1162.300" cy="168" r="13.400" fill="none" stroke="#555" stroke-width="4"/><path d="M1162.300 159.500V168.500L1168 173" fill="none" stroke="#555" stroke-width="3.600"/><path d="M2803.500 149.500L2817.500 163 2803.500 176.500" fill="none" stroke="#555" stroke-width="5.400"/><path d="M2206 262h13.400l-6.700 8z" fill="#333"/>

<path d="M2282.700 464.400V488.200L2301.500 476.300Z" fill="#fff"/><g opacity=".42"><path d="M2604.800 470.500h6.400l8.800-8.300v28.200l-8.800-8.300h-6.400z" fill="#fff"/><path d="M2623 468.600a8.400 8.400 0 0 1 0 15.400zM2623 462.200a14.600 14.600 0 0 1 0 28.400v-3.400a11.400 11.400 0 0 0 0-21.600z" fill="#fff"/></g><path d="M2706 472.500v-6h7M2719 466.500h7v6M2726 480v6h-7M2713 486h-7v-6" fill="none" stroke="#fff" stroke-width="4"/><circle cx="2812" cy="466.4" r="3.500" fill="#fff"/><circle cx="2812" cy="476.2" r="3.500" fill="#fff"/><circle cx="2812" cy="485.9" r="3.500" fill="#fff"/>

<circle cx="187.0" cy="961.2" r="10.4" fill="none" stroke="#666" stroke-width="4"/><path d="M194.5 968.7L202.7 976.9" stroke="#666" stroke-width="4" stroke-linecap="round"/>
<path d="M191.5 1045.5l11.0 10.2-11.0 10.2" fill="none" stroke="#444" stroke-width="3.8" stroke-linejoin="miter"/><path fill-rule="evenodd" fill="#2e2e2e" d="M2145.9 1046.6L2146.2 1042.9L2149.8 1042.9L2150.1 1046.6L2153.1 1047.9L2156.0 1045.5L2158.5 1048.0L2156.1 1050.9L2157.4 1053.9L2161.1 1054.2L2161.1 1057.8L2157.4 1058.1L2156.1 1061.1L2158.5 1064.0L2156.0 1066.5L2153.1 1064.1L2150.1 1065.4L2149.8 1069.1L2146.2 1069.1L2145.9 1065.4L2142.9 1064.1L2140.0 1066.5L2137.5 1064.0L2139.9 1061.1L2138.6 1058.1L2134.9 1057.8L2134.9 1054.2L2138.6 1053.9L2139.9 1050.9L2137.5 1048.0L2140.0 1045.5L2142.9 1047.9ZM2148 1049.800a6.200 6.200 0 1 0 0 12.400a6.200 6.200 0 1 0 0-12.400z"/><path d="M192.5 1104.5l11.0 10.5-11.0 10.5" fill="none" stroke="#444" stroke-width="3.8" stroke-linejoin="miter"/><g fill="none" stroke="#1f5fd6" stroke-width="2.2" stroke-linecap="round"><path d="M765.4 1113.6l2.6-2.6a4.600 4.600 0 0 1 6.500 6.500l-3.700 3.700a4.600 4.600 0 0 1-6.500 0"/><path d="M766.8 1123.4l-2.600 2.600a4.600 4.600 0 0 1-6.500-6.500l3.700-3.700a4.600 4.600 0 0 1 6.500 0"/></g><path d="M192.5 1158.5l11.0 10.5-11.0 10.5" fill="none" stroke="#444" stroke-width="3.8" stroke-linejoin="miter"/><path d="M192.5 1212.5l11.0 10.5-11.0 10.5" fill="none" stroke="#444" stroke-width="3.8" stroke-linejoin="miter"/><path d="M192.5 1266.5l11.0 10.5-11.0 10.5" fill="none" stroke="#444" stroke-width="3.8" stroke-linejoin="miter"/><g fill="none" stroke="#1f5fd6" stroke-width="2.2" stroke-linecap="round"><path d="M765.4 1275.6l2.6-2.6a4.600 4.600 0 0 1 6.500 6.500l-3.700 3.700a4.600 4.600 0 0 1-6.500 0"/><path d="M766.8 1285.4l-2.600 2.600a4.600 4.600 0 0 1-6.500-6.500l3.700-3.700a4.600 4.600 0 0 1 6.500 0"/></g><path d="M192.5 1320.5l11.0 10.5-11.0 10.5" fill="none" stroke="#444" stroke-width="3.8" stroke-linejoin="miter"/><g fill="none" stroke="#1f5fd6" stroke-width="2.2" stroke-linecap="round"><path d="M765.4 1329.6l2.6-2.6a4.600 4.600 0 0 1 6.500 6.500l-3.700 3.700a4.600 4.600 0 0 1-6.500 0"/><path d="M766.8 1339.4l-2.600 2.600a4.600 4.600 0 0 1-6.500-6.500l3.700-3.700a4.600 4.600 0 0 1 6.500 0"/></g><path d="M192.5 1374.5l11.0 10.5-11.0 10.5" fill="none" stroke="#444" stroke-width="3.8" stroke-linejoin="miter"/><g fill="none" stroke="#1f5fd6" stroke-width="2.2" stroke-linecap="round"><path d="M765.4 1383.6l2.6-2.6a4.600 4.600 0 0 1 6.500 6.500l-3.700 3.700a4.600 4.600 0 0 1-6.500 0"/><path d="M766.8 1393.4l-2.600 2.600a4.600 4.600 0 0 1-6.500-6.500l3.700-3.700a4.600 4.600 0 0 1 6.500 0"/></g><path d="M192.5 1428.5l11.0 10.5-11.0 10.5" fill="none" stroke="#444" stroke-width="3.8" stroke-linejoin="miter"/><path d="M192.5 1482.5l11.0 10.5-11.0 10.5" fill="none" stroke="#444" stroke-width="3.8" stroke-linejoin="miter"/><path d="M192.5 1536.5l11.0 10.5-11.0 10.5" fill="none" stroke="#444" stroke-width="3.8" stroke-linejoin="miter"/><g fill="none" stroke="#1f5fd6" stroke-width="2.2" stroke-linecap="round"><path d="M765.4 1545.6l2.6-2.6a4.600 4.600 0 0 1 6.500 6.500l-3.700 3.700a4.600 4.600 0 0 1-6.500 0"/><path d="M766.8 1555.4l-2.600 2.600a4.600 4.600 0 0 1-6.500-6.500l3.700-3.700a4.600 4.600 0 0 1 6.500 0"/></g><path d="M192.5 1590.5l11.0 10.5-11.0 10.5" fill="none" stroke="#444" stroke-width="3.8" stroke-linejoin="miter"/><g fill="none" stroke="#1f5fd6" stroke-width="2.2" stroke-linecap="round"><path d="M765.4 1599.6l2.6-2.6a4.600 4.600 0 0 1 6.500 6.500l-3.700 3.700a4.600 4.600 0 0 1-6.500 0"/><path d="M766.8 1609.4l-2.600 2.600a4.600 4.600 0 0 1-6.500-6.500l3.700-3.700a4.600 4.600 0 0 1 6.500 0"/></g>
<path d="M2580 630h-7.500v15.500h15.500v-7.500" fill="none" stroke="#222" stroke-width="2.200"/><path d="M2578 640L2588 630M2581.500 628.800h7.700v7.700" fill="none" stroke="#222" stroke-width="2.200"/><circle cx="2305.0" cy="758.0" r="10.4" fill="none" stroke="#666" stroke-width="4"/><path d="M2312.5 765.5L2320.7 773.7" stroke="#666" stroke-width="4" stroke-linecap="round"/><path d="M2795 845.500L2808.500 859 2822 845.500" fill="none" stroke="#666" stroke-width="5.200"/><path d="M2725.8 939.8H2710.6a1.3 1.3 0 0 1-1.3-1.3V923.6a1.3 1.3 0 0 1 1.3-1.3H2729.6a1.3 1.3 0 0 1 1.3 1.3V931.9" fill="none" stroke="#555" stroke-width="2.4" stroke-linecap="butt"/><path d="M2709.3 929.4H2731.0" stroke="#555" stroke-width="1.92"/><circle cx="2712.2" cy="925.5" r="1.0" fill="#555"/><circle cx="2716.0" cy="925.5" r="1.0" fill="#555"/><circle cx="2719.6" cy="925.5" r="1.0" fill="#555"/><circle cx="2730.4" cy="937.3" r="3.0" fill="#555"/><path d="M2725.2 945.8a5.2 4.5 0 0 1 10.4 0z" fill="#555"/><circle cx="2628.7" cy="1023.9" r="15.200" fill="none" stroke="#6b6b6b" stroke-width="3"/><path d="M2628.7 1023.5V1031.1" stroke="#6b6b6b" stroke-width="3.400" stroke-linecap="round"/><circle cx="2628.7" cy="1017.3" r="2.100" fill="#6b6b6b"/><rect x="2695.6" y="1018.1" width="20" height="18.3" rx="2" fill="none" stroke="#4a7c1f" stroke-width="2.800"/><path d="M2700.2 1017.8h10.800v-1.200q0-1.800-1.800-1.800h-7.200q-1.800 0-1.800 1.800z" fill="#4a7c1f"/><path d="M2694.2 1023.4H2692.9Q2691.4 1023.4 2691.4 1024.9V1029.8Q2691.4 1031.3 2692.9 1031.3H2694.2" fill="none" stroke="#4a7c1f" stroke-width="2.800"/><path d="M2717.0 1023.4H2718.3Q2719.8 1023.4 2719.8 1024.9V1029.8Q2719.8 1031.3 2718.3 1031.3H2717.0" fill="none" stroke="#4a7c1f" stroke-width="2.800"/><circle cx="2702.2" cy="1027.1" r="1.700" fill="#4a7c1f"/><circle cx="2708.8" cy="1027.1" r="1.700" fill="#4a7c1f"/><path d="M2320 1073.8h24l-12 12.400z" fill="#4a7c1f"/><path d="M2297.0 1166.9H2280.0a1.5 1.5 0 0 1-1.5-1.5V1148.7a1.5 1.5 0 0 1 1.5-1.5H2301.4a1.5 1.5 0 0 1 1.5 1.5V1158.0" fill="none" stroke="#666" stroke-width="2.6" stroke-linecap="butt"/><path d="M2278.5 1155.2H2302.9" stroke="#666" stroke-width="2.08"/><circle cx="2281.7" cy="1150.8" r="1.1" fill="#666"/><circle cx="2286.0" cy="1150.8" r="1.1" fill="#666"/><circle cx="2290.0" cy="1150.8" r="1.1" fill="#666"/><circle cx="2302.3" cy="1164.1" r="3.4" fill="#666"/><path d="M2296.4 1173.7a5.9 5.1 0 0 1 11.8 0z" fill="#666"/><circle cx="2575.0" cy="1241.9" r="15.200" fill="none" stroke="#6b6b6b" stroke-width="3"/><path d="M2575.0 1241.5V1249.1" stroke="#6b6b6b" stroke-width="3.400" stroke-linecap="round"/><circle cx="2575.0" cy="1235.3" r="2.100" fill="#6b6b6b"/><rect x="2736.6" y="1236.1" width="20" height="18.3" rx="2" fill="none" stroke="#4a7c1f" stroke-width="2.800"/><path d="M2741.2 1235.8h10.800v-1.200q0-1.800-1.800-1.800h-7.200q-1.800 0-1.800 1.800z" fill="#4a7c1f"/><path d="M2735.2 1241.4H2733.9Q2732.4 1241.4 2732.4 1242.9V1247.8Q2732.4 1249.3 2733.9 1249.3H2735.2" fill="none" stroke="#4a7c1f" stroke-width="2.800"/><path d="M2758.0 1241.4H2759.3Q2760.8 1241.4 2760.8 1242.9V1247.8Q2760.8 1249.3 2759.3 1249.3H2758.0" fill="none" stroke="#4a7c1f" stroke-width="2.800"/><circle cx="2743.2" cy="1245.1" r="1.700" fill="#4a7c1f"/><circle cx="2749.8" cy="1245.1" r="1.700" fill="#4a7c1f"/><path d="M2264 1291.8h24l-12 12.400z" fill="#4a7c1f"/><path d="M2297.0 1384.9H2280.0a1.5 1.5 0 0 1-1.5-1.5V1366.7a1.5 1.5 0 0 1 1.5-1.5H2301.4a1.5 1.5 0 0 1 1.5 1.5V1376.0" fill="none" stroke="#666" stroke-width="2.6" stroke-linecap="butt"/><path d="M2278.5 1373.2H2302.9" stroke="#666" stroke-width="2.08"/><circle cx="2281.7" cy="1368.8" r="1.1" fill="#666"/><circle cx="2286.0" cy="1368.8" r="1.1" fill="#666"/><circle cx="2290.0" cy="1368.8" r="1.1" fill="#666"/><circle cx="2302.3" cy="1382.1" r="3.4" fill="#666"/><path d="M2296.4 1391.7a5.9 5.1 0 0 1 11.8 0z" fill="#666"/><circle cx="2617.7" cy="1459.9" r="15.200" fill="none" stroke="#6b6b6b" stroke-width="3"/><path d="M2617.7 1459.5V1467.1" stroke="#6b6b6b" stroke-width="3.400" stroke-linecap="round"/><circle cx="2617.7" cy="1453.3" r="2.100" fill="#6b6b6b"/><rect x="2733.2" y="1454.1" width="20" height="18.3" rx="2" fill="none" stroke="#4a7c1f" stroke-width="2.800"/><path d="M2737.8 1453.8h10.800v-1.200q0-1.800-1.800-1.800h-7.200q-1.800 0-1.800 1.800z" fill="#4a7c1f"/><path d="M2731.8 1459.4H2730.5Q2729.0 1459.4 2729.0 1460.9V1465.8Q2729.0 1467.3 2730.5 1467.3H2731.8" fill="none" stroke="#4a7c1f" stroke-width="2.800"/><path d="M2754.6 1459.4H2755.9Q2757.4 1459.4 2757.4 1460.9V1465.8Q2757.4 1467.3 2755.9 1467.3H2754.6" fill="none" stroke="#4a7c1f" stroke-width="2.800"/><circle cx="2739.8" cy="1463.1" r="1.700" fill="#4a7c1f"/><circle cx="2746.4" cy="1463.1" r="1.700" fill="#4a7c1f"/><path d="M2301 1509.8h24l-12 12.400z" fill="#4a7c1f"/><path d="M2297.0 1602.9H2280.0a1.5 1.5 0 0 1-1.5-1.5V1584.7a1.5 1.5 0 0 1 1.5-1.5H2301.4a1.5 1.5 0 0 1 1.5 1.5V1594.0" fill="none" stroke="#666" stroke-width="2.6" stroke-linecap="butt"/><path d="M2278.5 1591.2H2302.9" stroke="#666" stroke-width="2.08"/><circle cx="2281.7" cy="1586.8" r="1.1" fill="#666"/><circle cx="2286.0" cy="1586.8" r="1.1" fill="#666"/><circle cx="2290.0" cy="1586.8" r="1.1" fill="#666"/><circle cx="2302.3" cy="1600.1" r="3.4" fill="#666"/><path d="M2296.4 1609.7a5.9 5.1 0 0 1 11.8 0z" fill="#666"/></svg>
</body></html>
